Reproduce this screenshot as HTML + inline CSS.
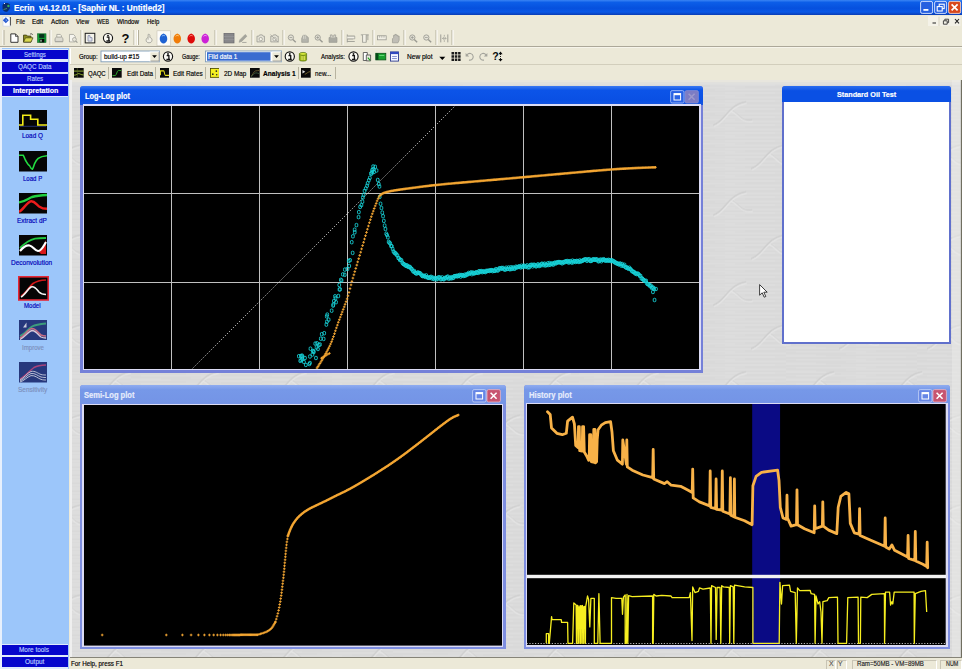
<!DOCTYPE html>
<html>
<head>
<meta charset="utf-8">
<title>Ecrin v4.12.01 - [Saphir NL : Untitled2]</title>
<style>
html,body{margin:0;padding:0;}
body{width:962px;height:669px;overflow:hidden;position:relative;background:#ece9d8;font-family:"Liberation Sans",sans-serif;font-size:9px;color:#000;}
div,span,svg{position:absolute;box-sizing:border-box;}
.t{white-space:nowrap;line-height:10px;height:10px;font-size:7.9px;transform-origin:0 50%;-webkit-text-stroke:0.18px currentColor;}
#titlebar{left:0;top:0;width:962px;height:15px;background:linear-gradient(#3a84f4 0%,#0c5ee8 16%,#0650de 55%,#0a58e6 80%,#0a3cb4 100%);}
#titletext{left:13.8px;top:1.6px;color:#fff;font-weight:bold;font-size:8.6px;line-height:12px;height:12px;}
#menubar{left:0;top:15px;width:962px;height:12px;background:#ece9d8;}
#tb1{left:0;top:27px;width:962px;height:21px;background:#ece9d8;}
#leftpanel{left:0;top:48px;width:69px;height:621px;background:#9cc6fa;}
.lbtn{left:2.2px;width:65.6px;height:9.8px;background:#0606cc;}
.lb{color:#b8ccff;}
.ll{color:#0000b8;font-size:7.9px;}
.lbl{width:69px;left:0;text-align:center;font-size:8.5px;line-height:10px;height:10px;color:#0000b0;white-space:nowrap;}
.ico{left:19px;width:28px;height:20.5px;background:#000;}
#tb2{left:70px;top:48px;width:892px;height:17px;background:#ece9d8;}
#tabs{left:70px;top:65px;width:892px;height:16px;background:#ece9d8;}
#mdi{left:70px;top:79.5px;width:892px;height:578px;background:#dbdbdb;overflow:hidden;}
#status{left:69px;top:657.5px;width:893px;height:11.5px;background:#ece9d8;}
.win{background:#7888e0;border-radius:3px 3px 0 0;}
.wt{left:0;top:0;height:18px;border-radius:3px 3px 0 0;}
.wtt{color:#fff;font-weight:bold;font-size:8.8px;}
.plot{display:block;}
.sep{width:1px;background:#b8b4a0;}
</style>
</head>
<body>

<!-- ===== Title bar ===== -->
<div id="titlebar">
    <svg style="left:0;top:0" width="14" height="15" viewBox="0 0 14 15"><path d="M2.5 5C4 2.5 8 2.5 9.8 4.5C10.6 6.5 9.5 10 7.5 11.5C5 12.5 2.5 11 2.5 8Z" fill="#0c2c6c"/><circle cx="8.4" cy="6" r="1.2" fill="#38b060"/><path d="M3.5 9.5L7 8.5" stroke="#4c8c5c" stroke-width="1"/><rect x="4" y="3" width="1" height="1" fill="#dfe8ff"/></svg>
  <svg style="left:918px;top:0" width="44" height="15" viewBox="918 0 44 15">
    <rect x="920.6" y="1.4" width="12" height="12" rx="1.6" fill="#2660e0" stroke="#dfe8ff" stroke-width="0.9"/><rect x="923.4" y="9" width="5" height="1.8" fill="#fff"/>
    <rect x="934.6" y="1.4" width="12" height="12" rx="1.6" fill="#2660e0" stroke="#dfe8ff" stroke-width="0.9"/><rect x="939.2" y="4.2" width="5" height="4.4" fill="none" stroke="#fff" stroke-width="1.1"/><rect x="937.2" y="6.6" width="5" height="4.4" fill="#2660e0" stroke="#fff" stroke-width="1.1"/>
    <rect x="948.6" y="1.4" width="12" height="12" rx="1.6" fill="#d8481c" stroke="#f4d4c8" stroke-width="0.9"/><path d="M951.6 4.4L957.6 10.4M957.6 4.4L951.6 10.4" stroke="#fff" stroke-width="1.7"/>
  </svg>
  <span id="titletext" class="t" style="transform:scaleX(0.953);">Ecrin&nbsp; v4.12.01 - [Saphir NL : Untitled2]</span>
</div>

<!-- ===== Menu bar ===== -->
<div id="menubar">
  <svg style="left:0;top:0" width="14" height="12" viewBox="0 15 14 12"><path d="M3 16.4H8.2L10.6 18.6V26.2H3Z" fill="#fdfdff" stroke="#c4cce0" stroke-width="0.6"/><path d="M5.8 17.2L8.8 20.2L5.8 23.2L2.8 20.2Z" fill="#2a5cd0"/><path d="M10.4 17V25.5" stroke="#333" stroke-width="0.9"/><path d="M5.8 19L7 20.2L5.8 21.4" fill="#9cc0ff"/></svg>
  <svg style="left:926px;top:0" width="36" height="12" viewBox="926 15 36 12"><rect x="928" y="16" width="10.5" height="10" fill="#f4f2e8"/><rect x="939.5" y="16" width="21" height="10" fill="#f2f0e6"/><path d="M932.5 23H936" stroke="#333" stroke-width="1.1"/><path d="M943.4 20.8H947.2V24.2H943.4Z" fill="none" stroke="#333" stroke-width="0.9"/><path d="M944.8 20.6V19.2H948.6V22.6H947.4" fill="none" stroke="#333" stroke-width="0.9"/><path d="M955 19L959 23.4M959 19L955 23.4" stroke="#222" stroke-width="1.1"/><path d="M939 17V26" stroke="#d4d0c0" stroke-width="0.7"/></svg>
  <span class="t" style="transform:scaleX(0.708);left:15.5px;top:1.7px;">File</span>
  <span class="t" style="transform:scaleX(0.808);left:32px;top:1.7px;">Edit</span>
  <span class="t" style="transform:scaleX(0.798);left:50.5px;top:1.7px;">Action</span>
  <span class="t" style="transform:scaleX(0.766);left:75.7px;top:1.7px;">View</span>
  <span class="t" style="transform:scaleX(0.667);left:96.7px;top:1.7px;">WEB</span>
  <span class="t" style="transform:scaleX(0.784);left:117px;top:1.7px;">Window</span>
  <span class="t" style="transform:scaleX(0.758);left:146.7px;top:1.7px;">Help</span>
</div>

<!-- ===== Toolbar 1 ===== -->
<div id="tb1">
<svg width="962" height="21" style="left:0;top:0" viewBox="0 0 962 21">
<path d="M3 3V18" stroke="#fff"/><path d="M4 3V18" stroke="#b4b09c"/>
<g transform="translate(14.3 11.1)"><path d="M-3.5 -4.2H1.2L3.7 -1.7V4.2H-3.5Z" fill="#fff" stroke="#222" stroke-width="0.9"/><path d="M1.2 -4.2V-1.7H3.7" fill="none" stroke="#222" stroke-width="0.7"/></g>
<g transform="translate(28 11.1)"><path d="M-4.5 4V-3H-1.5L-0.5 -2H3V4Z" fill="#8c8c20" stroke="#3c3c10" stroke-width="0.8"/><path d="M-4.5 4L-2.5 -0.3H5L3 4Z" fill="#d8d850" stroke="#3c3c10" stroke-width="0.7"/><path d="M2 -3.8C3 -4.8 4.3 -4.4 4.6 -3.2" stroke="#222" stroke-width="0.7" fill="none"/></g>
<g transform="translate(41.8 11.1)"><rect x="-4.2" y="-4.3" width="8.4" height="8.6" fill="#12a038" stroke="#0a6020" stroke-width="0.6"/><rect x="-2.6" y="-4" width="5.2" height="3.8" fill="#06301a"/><rect x="-2.2" y="0.8" width="4.8" height="3.5" fill="#050505"/><rect x="-1.4" y="1.6" width="1.2" height="2" fill="#bfe8c8"/></g>
<path d="M50 3V18" stroke="#b4b09c" stroke-width="1"/><path d="M51 3V18" stroke="#fff" stroke-width="1"/>
<g transform="translate(59 11.4) scale(0.88)"><path d="M-2.5 -1V-4.5H1.5L2.8 -3V-1" fill="#f4f2e8" stroke="#9a9a92" stroke-width="0.8"/><path d="M-4.5 3.5V0L-3 -1.5H3L4.5 0V3.5Z" fill="#dcdad0" stroke="#9a9a92" stroke-width="0.9"/><path d="M-4.5 3.8H4.5" stroke="#a8a8a0" stroke-width="1.2"/></g>
<g transform="translate(73 11.4) scale(0.88)"><path d="M-4 -4.5H0.5L2.5 -2.5V4H-4Z" fill="#f6f5ee" stroke="#9a9a92" stroke-width="0.8"/><circle cx="1.6" cy="1.2" r="2.2" fill="#e8e6da" stroke="#9a9a92" stroke-width="0.8"/><path d="M3.2 3L5 4.8" stroke="#9a9a92" stroke-width="1.3"/></g>
<path d="M81 3V18" stroke="#b4b09c" stroke-width="1"/><path d="M82 3V18" stroke="#fff" stroke-width="1"/>
<g transform="translate(90 11.1)"><rect x="-4.8" y="-4.8" width="9.6" height="9.6" fill="#f4f3ea" stroke="#1c1c1c" stroke-width="1"/><path d="M-2 -2.5H0V-0.5H2V3H-2Z" fill="#e0e4ee" stroke="#7880a0" stroke-width="0.7"/></g>
<g transform="translate(108 11.1)"><circle r="4.6" fill="#fbfaf4" stroke="#141414" stroke-width="1.15"/><path d="M-1.3 -0.9H0.9V2.7M-1.6 2.9H2" stroke="#141414" stroke-width="1.3" fill="none"/><circle cx="0" cy="-2.5" r="0.95" fill="#141414"/></g>
<text x="125.4" y="15.6" font-family="Liberation Sans" font-weight="bold" font-size="13" text-anchor="middle" fill="#0a0a0a">?</text>
<path d="M134 3V18" stroke="#b4b09c" stroke-width="1"/><path d="M135 3V18" stroke="#fff" stroke-width="1"/>
<path d="M137.5 3V18" stroke="#fff"/><path d="M138.5 3V18" stroke="#b4b09c"/>
<g transform="translate(149 11.4) scale(0.88)"><path d="M-1 -4.5C0.2 -5 1 -4.4 1 -3.3V-1C2.6 -0.8 3.6 0.4 3.4 2.2C3.2 4 2 5 0 5C-2 5 -3.3 3.8 -3.3 2C-3.3 0.4 -2.4 -0.6 -1 -1Z" fill="#f2f0e6" stroke="#9a9a92" stroke-width="0.9"/><path d="M-1 -1V1.5" stroke="#9a9a92" stroke-width="0.8"/></g>
<rect x="157" y="3.8" width="13.6" height="15" fill="#fdfcf8" stroke="#c8c4b4" stroke-width="0.6"/>
<g transform="translate(163.5 11.5)"><path d="M0 -5C2.6 -4.2 4.2 -1.5 3.6 1.6C3.1 4 1.6 5 0 5C-1.6 5 -3.1 4 -3.6 1.6C-4.2 -1.5 -2.6 -4.2 0 -5Z" fill="#1e62d2"/><path d="M-1.6 -2.2C-0.8 -3.2 0.6 -3.4 1.4 -2.6" stroke="#8fc0ff" stroke-width="1" fill="none"/></g>
<g transform="translate(177.3 11.5)"><path d="M0 -5C2.6 -4.2 4.2 -1.5 3.6 1.6C3.1 4 1.6 5 0 5C-1.6 5 -3.1 4 -3.6 1.6C-4.2 -1.5 -2.6 -4.2 0 -5Z" fill="#f07c08"/><path d="M-1.6 -2.2C-0.8 -3.2 0.6 -3.4 1.4 -2.6" stroke="#ffd080" stroke-width="1" fill="none"/></g>
<g transform="translate(191.2 11.5)"><path d="M0 -5C2.6 -4.2 4.2 -1.5 3.6 1.6C3.1 4 1.6 5 0 5C-1.6 5 -3.1 4 -3.6 1.6C-4.2 -1.5 -2.6 -4.2 0 -5Z" fill="#de0a0a"/><path d="M-1.6 -2.2C-0.8 -3.2 0.6 -3.4 1.4 -2.6" stroke="#ff8a7a" stroke-width="1" fill="none"/></g>
<g transform="translate(205.2 11.5)"><path d="M0 -5C2.6 -4.2 4.2 -1.5 3.6 1.6C3.1 4 1.6 5 0 5C-1.6 5 -3.1 4 -3.6 1.6C-4.2 -1.5 -2.6 -4.2 0 -5Z" fill="#cc22d6"/><path d="M-1.6 -2.2C-0.8 -3.2 0.6 -3.4 1.4 -2.6" stroke="#f8a0ff" stroke-width="1" fill="none"/></g>
<path d="M215 3V18" stroke="#b4b09c" stroke-width="1"/><path d="M216 3V18" stroke="#fff" stroke-width="1"/>
<g transform="translate(229 11.1)"><rect x="-5" y="-4.6" width="10" height="9.4" fill="#87878a" stroke="#6c6c70" stroke-width="0.8"/><path d="M-5 -1.5H5M-5 1.6H5" stroke="#9c9ca0" stroke-width="0.6"/></g>
<g transform="translate(243 11.4) scale(0.88)"><path d="M-4.5 4.5L-3.5 1.5L2.5 -4.5L4.5 -2.5L-1.5 3.5Z" fill="#a4a49c" stroke="#9a9a92" stroke-width="0.6"/><path d="M-1 4.6H4" stroke="#9a9a92" stroke-width="0.9"/></g>
<path d="M252 3V18" stroke="#b4b09c" stroke-width="1"/><path d="M253 3V18" stroke="#fff" stroke-width="1"/>
<g transform="translate(260.5 11.4) scale(0.88)"><path d="M-4 -2.5H-2L-1 -4H2L3 -2.5H4.5V4H-4Z" fill="#e4e2d6" stroke="#9a9a92" stroke-width="0.9"/><circle cx="0.3" cy="0.8" r="1.9" fill="#f6f4ea" stroke="#9a9a92" stroke-width="0.8"/></g>
<g transform="translate(274.3 11.4) scale(0.88)"><path d="M-4 -2.5H-2L-1 -4H2L3 -2.5H4.5V4H-4Z" fill="#e4e2d6" stroke="#9a9a92" stroke-width="0.9"/><circle cx="0.3" cy="0.8" r="1.9" fill="#f6f4ea" stroke="#9a9a92" stroke-width="0.8"/><path d="M-4.5 -4.5L4.5 4.5" stroke="#9a9a92" stroke-width="0.7"/></g>
<path d="M283 3V18" stroke="#b4b09c" stroke-width="1"/><path d="M284 3V18" stroke="#fff" stroke-width="1"/>
<g transform="translate(291.8 11.4) scale(0.88)"><circle cx="-1" cy="-1" r="3" fill="#e4e2d6" stroke="#9a9a92" stroke-width="1"/><path d="M1.2 1.2L4.5 4.5" stroke="#9a9a92" stroke-width="1.6"/><path d="M-2.6 -1H0.6" stroke="#9a9a92" stroke-width="0.9"/></g>
<g transform="translate(304.8 11.4) scale(0.88)"><path d="M-3.5 4.5V0L-2 -3.5H1L4 -1V4.5Z" fill="#b4b4ac" stroke="#9a9a92" stroke-width="0.8"/><path d="M-1.5 -3.5V0.5M0.5 -3.5V0.5" stroke="#e8e6dc" stroke-width="0.7"/></g>
<g transform="translate(318.6 11.4) scale(0.88)"><circle cx="-1" cy="-1" r="3" fill="#e4e2d6" stroke="#9a9a92" stroke-width="1"/><path d="M1.2 1.2L4.5 4.5" stroke="#9a9a92" stroke-width="1.6"/><path d="M-2.6 -1H0.6M-1 -2.6V0.6" stroke="#9a9a92" stroke-width="0.9"/></g>
<g transform="translate(333 11.4) scale(0.88)"><path d="M-4.5 4.5V-1H4.5V4.5Z" fill="#aaaaa2" stroke="#9a9a92" stroke-width="0.8"/><path d="M-3 -1V-4H-1V-2.5H1V-4H3V-1" fill="#d8d6cc" stroke="#9a9a92" stroke-width="0.8"/></g>
<path d="M342 3V18" stroke="#b4b09c" stroke-width="1"/><path d="M343 3V18" stroke="#fff" stroke-width="1"/>
<g transform="translate(350.8 11.4) scale(0.88)"><path d="M-4 -4.5V4.5M-4 -2.5H4.5M-4 0.5H2.5M-4 3.5H4.5" stroke="#9a9a92" stroke-width="1" fill="none"/><path d="M-4 -2.5H4.5V0.5H-4" fill="#f2f0e6" stroke="#9a9a92" stroke-width="0.8"/></g>
<g transform="translate(364.8 11.4) scale(0.88)"><path d="M-4.5 -4H4.5M-2.5 -4V4.5M1.5 -4V4.5M3.5 -4V2" stroke="#9a9a92" stroke-width="1" fill="none"/><path d="M-2.5 -4V4.5H1.5V-4" fill="#f2f0e6" stroke="#9a9a92" stroke-width="0.8"/></g>
<path d="M373 3V18" stroke="#b4b09c" stroke-width="1"/><path d="M374 3V18" stroke="#fff" stroke-width="1"/>
<g transform="translate(381.8 11.4) scale(0.88)"><rect x="-5" y="-3" width="10" height="4.6" fill="#f0eee4" stroke="#9a9a92" stroke-width="0.9"/><path d="M-2.5 -3V-0.8M0 -3V-0.8M2.5 -3V-0.8" stroke="#9a9a92" stroke-width="0.7"/></g>
<g transform="translate(395.8 11.4) scale(0.88)"><path d="M-3.8 5V0.5L-2.5 -1V-3.5H-1V-4.5H0.6V-3.5H2.2V-2.6H3.8V2L2.5 5Z" fill="#c0beb6" stroke="#9a9a92" stroke-width="0.8"/></g>
<path d="M404 3V18" stroke="#b4b09c" stroke-width="1"/><path d="M405 3V18" stroke="#fff" stroke-width="1"/>
<g transform="translate(413.2 11.4) scale(0.88)"><circle cx="-1" cy="-1" r="3" fill="#e4e2d6" stroke="#9a9a92" stroke-width="1"/><path d="M1.2 1.2L4.5 4.5" stroke="#9a9a92" stroke-width="1.6"/><path d="M-2.6 -1H0.6M-1 -2.6V0.6" stroke="#9a9a92" stroke-width="0.9"/></g>
<g transform="translate(427.2 11.4) scale(0.88)"><circle cx="-1" cy="-1" r="3" fill="#e4e2d6" stroke="#9a9a92" stroke-width="1"/><path d="M1.2 1.2L4.5 4.5" stroke="#9a9a92" stroke-width="1.6"/><path d="M-2.6 -1H0.6" stroke="#9a9a92" stroke-width="0.9"/></g>
<path d="M436 3V18" stroke="#b4b09c" stroke-width="1"/><path d="M437 3V18" stroke="#fff" stroke-width="1"/>
<g transform="translate(444.3 11.4) scale(0.88)"><path d="M-4 -4.5V4.5M4 -4.5V4.5" stroke="#9a9a92" stroke-width="1.1"/><path d="M-2 0H2M-2 0L-0.5 -1.5M-2 0L-0.5 1.5M2 0L0.5 -1.5M2 0L0.5 1.5M0 -4V-2M0 2V4" stroke="#9a9a92" stroke-width="0.8" fill="none"/></g>
<path d="M452 3V18" stroke="#b4b09c" stroke-width="1"/><path d="M453 3V18" stroke="#fff" stroke-width="1"/>
<path d="M0 19.5H962" stroke="#aca899" stroke-width="1"/><path d="M0 20.5H962" stroke="#f6f4ea" stroke-width="1"/>
</svg>
</div>

<!-- ===== Left panel ===== -->
<div id="leftpanel">
  <div style="left:0;top:0;width:2.2px;height:621px;background:#e8f0fc;"></div>
  <div style="left:2px;top:0.5px;width:66px;height:48.6px;background:#dfeafc;"></div>
  <div style="left:2px;top:596px;width:66px;height:25px;background:#dfeafc;"></div>
  <div class="lbtn" style="top:1.6px;"></div><span class="t lb" style="transform:scaleX(0.768);left:23.8px;top:1.5px;">Settings</span>
  <div class="lbtn" style="top:14px;"></div><span class="t lb" style="transform:scaleX(0.796);left:18px;top:13.9px;">QAQC Data</span>
  <div class="lbtn" style="top:26.1px;"></div><span class="t lb" style="transform:scaleX(0.785);left:26.9px;top:26px;">Rates</span>
  <div class="lbtn" style="top:38.3px;"></div><span class="t lb" style="transform:scaleX(0.893);left:12.5px;top:38.2px;color:#fff;font-weight:bold;">Interpretation</span>

  <svg style="left:19px;top:61.5px" width="28" height="20.5" viewBox="0 0 28 20.5"><rect width="28" height="20.5" fill="#050505"/><path d="M1 16.3H27" stroke="#2c3c8c" stroke-width="0.8"/><path d="M0 15H3.8V5.2H11.6V9.2H18.8V15H28" stroke="#f4ec18" stroke-width="1.6" fill="none"/></svg>
  <span class="t ll" style="transform:scaleX(0.811);left:21.5px;top:83px;">Load Q</span>
  <svg style="left:19px;top:103px" width="28" height="20.5" viewBox="0 0 28 20.5"><rect width="28" height="20.5" fill="#050505"/><path d="M0 4.2H4.2C5.2 5.5 5.6 7.6 6.4 9C7.6 11 8.6 13 9.6 14C10.4 14.6 10.8 14.8 11.2 15.8C11.8 17.2 12.6 18.4 13.4 18.2C14.4 17 14.8 14.6 15.6 12.6C16.6 10.4 17.6 8.8 19.2 7.4C21.4 5.8 24.4 5 28 4.7" stroke="#22dc40" stroke-width="1.6" fill="none"/></svg>
  <span class="t ll" style="transform:scaleX(0.768);left:22.7px;top:125.5px;">Load P</span>
  <svg style="left:19px;top:145px" width="28" height="20.5" viewBox="0 0 28 20.5"><rect width="28" height="20.5" fill="#050505"/><path d="M0 9.4C6 8.6 9 5.6 13 4C18 2.6 23 2.2 28 2" stroke="#20d040" stroke-width="2.4" fill="none"/><path d="M0 18.8C4 17 7 10.4 11.5 8.4C15 7.4 17 11 20 13.4C23 15.4 25.5 15.8 28 15.8" stroke="#ea1c1c" stroke-width="2.4" fill="none"/></svg>
  <span class="t ll" style="transform:scaleX(0.821);left:17.2px;top:168px;">Extract dP</span>
  <svg style="left:19px;top:187px" width="28" height="20.5" viewBox="0 0 28 20.5"><rect width="28" height="20.5" fill="#050505"/><path d="M1 13C5 9 10 5 16 3.6C20 3 24 3 27 3" stroke="#20c840" stroke-width="1.8" fill="none"/><path d="M20 17C23 15 25 10 27 5V19H22Z" fill="#d81818"/><path d="M1 16C4 12.5 7 10 10.5 10.5C14 11 15.5 15.5 19 16C22.5 16 24.5 11 27 7" stroke="#fff" stroke-width="2.2" fill="none"/></svg>
  <span class="t ll" style="transform:scaleX(0.824);left:11.4px;top:210px;">Deconvolution</span>
  <svg style="left:17.5px;top:227.8px" width="31" height="24.8" viewBox="0 0 31 24.8"><rect x="0.8" y="0.8" width="29.4" height="23.2" fill="#050505" stroke="#e42838" stroke-width="1.6"/><path d="M3 20C8 17.5 11 11 15 7.5C19 4.8 23 4.2 28 4" stroke="#d01818" stroke-width="1.7" fill="none"/><path d="M3 21C7 19 9.5 13 13 11C16.5 9.6 18.5 13 21 16C23 18 25.5 18.5 28 18.5" stroke="#f4f4f4" stroke-width="1.7" fill="none"/></svg>
  <span class="t ll" style="transform:scaleX(0.767);left:24.1px;top:252.5px;">Model</span>
  <svg style="left:19px;top:271.5px" width="28" height="20.5" viewBox="0 0 28 20.5"><rect width="28" height="20.5" fill="#26387c"/><path d="M1 16C6 14 9 9 13 6.5C17 4.5 22 4 27 3.5" stroke="#3c9c7c" stroke-width="1.8" fill="none"/><path d="M1 18C6 15.5 9 9 13 8.5C17 8.5 19 13 22 15C24 16 26 16 27 16" stroke="#c86c84" stroke-width="1.6" fill="none"/><path d="M1 19.5C6 17 9 11.5 13 10.5C17 10.5 19 15 22 17C24 18 26 18 27 18" stroke="#d8c8d8" stroke-width="1.3" fill="none"/><path d="M4 7.5L7.5 2.5V7.5Z" fill="#c8ccdc"/></svg>
  <span class="t ll" style="transform:scaleX(0.772);left:21.6px;top:294.7px;color:#7c90bc;">Improve</span>
  <svg style="left:19px;top:314px" width="28" height="20.5" viewBox="0 0 28 20.5"><rect width="28" height="20.5" fill="#26387c"/><path d="M1 17C6 15 10 9 15 5.5C19 3.5 23 3.2 27 3" stroke="#a8447c" stroke-width="1.5" fill="none"/><path d="M1 18C5 16 8 11 12 9.5C16 8.5 19 11.5 22 12.5C24 13 26 13 27 13M1 19C5 17.5 8 13 12 11.5C16 10.8 19 14 22 15C24 15.5 26 15.5 27 15.5M1 20C5 19 8 15 12 13.6C16 13 19 16.4 22 17.4C24 18 26 18 27 18" stroke="#c8ccdc" stroke-width="0.9" fill="none"/></svg>
  <span class="t ll" style="transform:scaleX(0.822);left:17.8px;top:336.6px;color:#7c90bc;">Sensitivity</span>

  <div class="lbtn" style="top:597px;"></div><span class="t lb" style="transform:scaleX(0.814);left:19.4px;top:597px;">More tools</span>
  <div class="lbtn" style="top:609.3px;"></div><span class="t lb" style="transform:scaleX(0.819);left:25px;top:609.2px;">Output</span>
</div>

<!-- ===== Toolbar 2 ===== -->
<div id="tb2">
<svg width="892" height="17" style="left:0;top:0" viewBox="0 0 892 17">
<path d="M0.5 17V0.5" stroke="#fff" fill="none"/><path d="M0 -0.5H892" stroke="#aca899"/>
<rect x="31" y="3" width="58.5" height="10.8" fill="#fff" stroke="#7f9db9" stroke-width="0.9"/><rect x="80.0" y="4" width="9" height="9" fill="#ece9d8" stroke="#fff" stroke-width="0.8"/><path d="M82.1 7.2H86.9L84.5 10Z" fill="#000"/><path d="M80.5 13H89.1V4" stroke="#8c887c" stroke-width="0.8" fill="none"/>
<g transform="translate(98 8.5)"><circle r="4.6" fill="#fbfaf4" stroke="#141414" stroke-width="1.15"/><path d="M-1.3 -0.9H0.9V2.7M-1.6 2.9H2" stroke="#141414" stroke-width="1.3" fill="none"/><circle cx="0" cy="-2.5" r="0.95" fill="#141414"/></g>
<rect x="135.5" y="3" width="76" height="10.8" fill="#fff" stroke="#7f9db9" stroke-width="0.9"/><rect x="137" y="4.2" width="63.5" height="8.5" fill="#3a6cd0"/><rect x="202.0" y="4" width="9" height="9" fill="#ece9d8" stroke="#fff" stroke-width="0.8"/><path d="M204.1 7.2H208.9L206.5 10Z" fill="#000"/><path d="M202.5 13H211.1V4" stroke="#8c887c" stroke-width="0.8" fill="none"/>
<g transform="translate(219.8 8.5)"><circle r="4.6" fill="#fbfaf4" stroke="#141414" stroke-width="1.15"/><path d="M-1.3 -0.9H0.9V2.7M-1.6 2.9H2" stroke="#141414" stroke-width="1.3" fill="none"/><circle cx="0" cy="-2.5" r="0.95" fill="#141414"/></g>
<g transform="translate(233 8.5)"><path d="M-3.6 -2.6V3.4C-3.6 5 3.6 5 3.6 3.4V-2.6Z" fill="#9cb418" stroke="#4c6c08" stroke-width="0.7"/><ellipse cx="0" cy="-2.6" rx="3.6" ry="1.5" fill="#d6e83c" stroke="#4c6c08" stroke-width="0.7"/><path d="M-1 -0.5V3.6M1.2 -0.5V3.6" stroke="#f0f480" stroke-width="0.9"/></g>
<g transform="translate(283.5 8.5)"><circle r="4.6" fill="#fbfaf4" stroke="#141414" stroke-width="1.15"/><path d="M-1.3 -0.9H0.9V2.7M-1.6 2.9H2" stroke="#141414" stroke-width="1.3" fill="none"/><circle cx="0" cy="-2.5" r="0.95" fill="#141414"/></g>
<g transform="translate(296.8 8.5)"><path d="M-3.5 -4H0.5V4H-3.5Z" fill="#fff" stroke="#444" stroke-width="0.8"/><path d="M-0.5 -1.5H3.8V4.4H-0.5Z" fill="#e8e8e0" stroke="#444" stroke-width="0.8"/><path d="M1 1.2L3.4 3.8" stroke="#18a018" stroke-width="1.2"/></g>
<g transform="translate(310.8 8.5)"><rect x="-5" y="-3.2" width="10" height="6.6" fill="#18a030" stroke="#0a5018" stroke-width="0.8"/><rect x="-5" y="-3.2" width="2.6" height="6.6" fill="#064818"/><path d="M-1.5 -1H3.5" stroke="#7be08c" stroke-width="0.8"/></g>
<g transform="translate(324.5 8.5)"><rect x="-4" y="-4.6" width="8" height="9.2" fill="#f4f6ff" stroke="#2a3a90" stroke-width="0.9"/><rect x="-4" y="-4.6" width="8" height="2.2" fill="#3048c0"/><path d="M-2.4 0H2.4M-2.4 2H2.4" stroke="#6a78c8" stroke-width="0.8"/></g>
<path d="M369.3 8.8H375.3L372.3 12Z" fill="#000"/>
<g transform="translate(386 8.5)"><path d="M-4.5 -4.5H-2V-2H-4.5ZM-1.2 -4.5H1.3V-2H-1.2ZM2.1 -4.5H4.6V-2H2.1ZM-4.5 -1.2H-2V1.3H-4.5ZM-1.2 -1.2H1.3V1.3H-1.2ZM2.1 -1.2H4.6V1.3H2.1ZM-4.5 2.1H-2V4.6H-4.5ZM-1.2 2.1H1.3V4.6H-1.2ZM2.1 2.1H4.6V4.6H2.1Z" fill="#1a1a1a"/></g>
<g transform="translate(399.8 8.5)"><path d="M-3 -1.5C-1 -4 3 -3.5 3.4 0C3.6 2.4 1.5 4 -0.8 3.6" stroke="#a4a49c" stroke-width="1.1" fill="none"/><path d="M-4.2 -3.6V0H-0.6Z" fill="#a4a49c"/></g>
<g transform="translate(413.2 8.5)"><path d="M3 -1.5C1 -4 -3 -3.5 -3.4 0C-3.6 2.4 -1.5 4 0.8 3.6" stroke="#a4a49c" stroke-width="1.1" fill="none"/><path d="M4.2 -3.6V0H0.6Z" fill="#a4a49c"/></g>
<text x="425.5" y="12.2" font-family="Liberation Sans" font-weight="bold" font-size="10.5" text-anchor="middle" fill="#0a0a0a">?</text><path d="M430.5 3.6L432.6 6.2H428.4ZM430.5 13.6L432.6 11H428.4Z" fill="#0a0a0a"/><path d="M430.5 6V11" stroke="#0a0a0a" stroke-width="0.9" stroke-dasharray="1 1"/>
</svg>
<span class="t" style="transform:scaleX(0.775);left:8.7px;top:3.5px;">Group:</span>
<span class="t" style="transform:scaleX(0.813);left:33.7px;top:3.5px;">build-up #15</span>
<span class="t" style="transform:scaleX(0.691);left:112px;top:3.5px;">Gauge:</span>
<span class="t" style="transform:scaleX(0.795);left:137.7px;top:3.5px;color:#fff;">Fild data 1</span>
<span class="t" style="transform:scaleX(0.760);left:251px;top:3.5px;">Analysis:</span>
<span class="t" style="transform:scaleX(0.831);left:336.5px;top:3.5px;">New plot</span>
</div>

<!-- ===== Tabs ===== -->
<div id="tabs">
<div style="left:0;top:-1.1px;width:892px;height:1px;background:#d2cebc;"></div>
<svg style="left:4.3px;top:3.4px" width="9.7" height="9.7" preserveAspectRatio="none" viewBox="0 0 10.5 10"><rect width="10.5" height="10" fill="#0a0a0a"/><path d="M0 3.2H10.5M0 7.4C3 7.4 3.6 5.8 5 5.8C6.6 5.8 7.4 7.2 10.5 7.2" stroke="#a8c838" stroke-width="0.9" fill="none"/><path d="M3.6 0V10" stroke="#5c6c20" stroke-width="0.6"/></svg>
<span class="t" style="transform:scaleX(0.757);left:18px;top:3.9px;">QAQC</span>
<div class="sep" style="left:37.8px;top:2px;height:12px;"></div>
<svg style="left:42.3px;top:3.4px" width="9.7" height="9.7" preserveAspectRatio="none" viewBox="0 0 10.5 10"><rect width="10.5" height="10" fill="#0a0a0a"/><path d="M0.5 7.8H3.5C5 7.8 5.4 2.6 6.8 2.6H10" stroke="#30b030" stroke-width="1" fill="none"/></svg>
<span class="t" style="transform:scaleX(0.804);left:56.9px;top:3.9px;">Edit Data</span>
<div class="sep" style="left:85.3px;top:2px;height:12px;"></div>
<svg style="left:89.5px;top:3.4px" width="9.7" height="9.7" preserveAspectRatio="none" viewBox="0 0 10.5 10"><rect width="10.5" height="10" fill="#0a0a0a"/><path d="M0.5 7.6V3H4C4.8 3 4.8 7.6 5.8 7.6H10.5" stroke="#e8e020" stroke-width="1.1" fill="none"/></svg>
<span class="t" style="transform:scaleX(0.816);left:103px;top:3.9px;">Edit Rates</span>
<div class="sep" style="left:134.6px;top:2px;height:12px;"></div>
<svg style="left:139.7px;top:3.4px" width="9.7" height="9.7" preserveAspectRatio="none" viewBox="0 0 10.4 10"><rect width="10.4" height="10" fill="#f4f020"/><rect x="0.4" y="0.4" width="9.6" height="9.2" fill="#f4f020" stroke="#3c3c08" stroke-width="0.8"/><circle cx="3" cy="6.4" r="0.9" fill="#222"/><circle cx="6.8" cy="3.2" r="0.9" fill="#222"/><circle cx="7.2" cy="7" r="0.8" fill="#222"/></svg>
<span class="t" style="transform:scaleX(0.810);left:153.6px;top:3.9px;">2D Map</span>
<svg style="left:179.9px;top:3.4px" width="9.7" height="9.7" preserveAspectRatio="none" viewBox="0 0 10.6 10"><rect width="10.6" height="10" fill="#0a0a0a"/><path d="M1 8.5C3 7.5 4 3.4 6 3C8 2.8 9 2.6 10.6 2.4" stroke="#6c5c30" stroke-width="0.9" fill="none"/><path d="M1 9C3.5 8 4 5 6.4 5C8 5 9 5.6 10.6 6" stroke="#3c5c3c" stroke-width="0.9" fill="none"/></svg>
<span class="t" style="transform:scaleX(0.837);left:193px;top:3.6px;font-weight:bold;">Analysis 1</span>
<div class="sep" style="left:227.8px;top:2px;height:12px;"></div>
<svg style="left:231.3px;top:3.4px" width="9.7" height="9.7" preserveAspectRatio="none" viewBox="0 0 10.2 10"><rect width="10.2" height="10" fill="#0a0a0a"/><path d="M1.5 2L4.5 3.8L1.5 5.6Z" fill="#ddd"/><path d="M4 6.5C6 6 7 4 10 3.6" stroke="#80682c" stroke-width="0.9" fill="none"/></svg>
<span class="t" style="transform:scaleX(0.785);left:245px;top:3.9px;">new...</span>
<div class="sep" style="left:264.8px;top:2px;height:12px;"></div>
</div>

<!-- ===== MDI client area ===== -->
<div id="mdi">
<svg style="left:0;top:0" width="892" height="578" viewBox="70 79.5 892 578">
<defs>
<pattern id="brush" width="131" height="8" patternUnits="userSpaceOnUse"><rect width="131" height="8" fill="#dbdbdb"/><path d="M0 0.5H70M30 2.5H131M0 5.5H55M90 6.5H131" stroke="#d7d7d7" stroke-width="1"/><path d="M60 1.5H131M0 3.5H40M70 4.5H120M10 7.5H80" stroke="#dfdfdf" stroke-width="1"/></pattern>
<pattern id="logos" width="88" height="90" patternUnits="userSpaceOnUse"><g transform="translate(29.6 23.6)"><g fill="none" stroke-linecap="round"><path d="M-20 11C-8 7 -6 -9 12 -12M-3 -4C4 -2 6 8 18 6" stroke="#cdcdcd" stroke-width="1.5"/><path d="M-19.3 12.2C-7.3 8.2 -5.3 -7.8 12.7 -10.8M-2.3 -2.8C4.7 -0.8 6.7 9.2 18.7 7.2" stroke="#e6e6e6" stroke-width="1.2"/></g></g><g transform="translate(-20.3 67.0)"><g fill="none" stroke-linecap="round"><path d="M-20 11C-8 7 -6 -9 12 -12M-3 -4C4 -2 6 8 18 6" stroke="#cdcdcd" stroke-width="1.5"/><path d="M-19.3 12.2C-7.3 8.2 -5.3 -7.8 12.7 -10.8M-2.3 -2.8C4.7 -0.8 6.7 9.2 18.7 7.2" stroke="#e6e6e6" stroke-width="1.2"/></g></g><g transform="translate(67.7 67.0)"><g fill="none" stroke-linecap="round"><path d="M-20 11C-8 7 -6 -9 12 -12M-3 -4C4 -2 6 8 18 6" stroke="#cdcdcd" stroke-width="1.5"/><path d="M-19.3 12.2C-7.3 8.2 -5.3 -7.8 12.7 -10.8M-2.3 -2.8C4.7 -0.8 6.7 9.2 18.7 7.2" stroke="#e6e6e6" stroke-width="1.2"/></g></g></pattern>
</defs>
<rect x="70" y="79" width="892" height="579" fill="url(#brush)"/>
<rect x="70" y="79" width="892" height="579" fill="url(#logos)"/>
<rect x="70" y="79.5" width="892" height="2.5" fill="#e8e6de"/><rect x="70" y="82" width="892" height="2" fill="#e2e2e0" opacity="0.7"/>
<rect x="70" y="79.5" width="2" height="578" fill="#efefef"/>
<rect x="960.8" y="79.5" width="1.2" height="578" fill="#706e60"/><rect x="952" y="79.5" width="8.8" height="578" fill="#f0f0ee" opacity="0.4"/>
<rect x="70" y="656.6" width="892" height="0.9" fill="#7c7a6c"/>
</svg>
</div>

<!-- Log-Log window -->
<div class="win" style="left:80.2px;top:86.3px;width:623px;height:286.7px;background:#7480d8;">
  <div class="wt" style="width:622.8px;height:18.5px;background:linear-gradient(#3a78f2 0%,#0c54e8 22%,#0a50e4 75%,#1656e0 100%);"></div>
  <div style="left:2.4px;top:18px;width:618.2px;height:266.1px;background:#dcdcf4;"></div>
  <span class="t wtt" style="transform:scaleX(0.835);left:4.6px;top:5px;">Log-Log plot</span>
</div>
<svg style="left:669.5px;top:89.5px" width="30" height="14" viewBox="0 0 30 14"><rect x="0.6" y="0.6" width="13.4" height="12.4" rx="1.5" fill="#2a62e4" stroke="#9cb8f8" stroke-width="0.9"/><rect x="4" y="3.6" width="6.6" height="6.4" fill="none" stroke="#fff" stroke-width="1"/><path d="M4 4.4H10.6" stroke="#fff" stroke-width="1.6"/><rect x="15" y="0.6" width="13.4" height="12.4" rx="1.5" fill="#7c7cc4" stroke="#8890d4" stroke-width="0.7"/><path d="M18.6 3.8L24.6 9.8M24.6 3.8L18.6 9.8" stroke="#9c98cc" stroke-width="1.6"/></svg>
<svg class="plot" style="left:84px;top:106px" width="615" height="263" viewBox="84 106 615 263">
<rect x="84" y="106" width="615" height="263" fill="#000"/>
<path d="M171.5 106V370M259.5 106V370M347.5 106V370M435.5 106V370M523.5 106V370M611.5 106V370M84 193.5H699M84 282.5H699" stroke="#c0c0c0" stroke-width="1" fill="none"/>
<path d="M191.5 369.5L455 106" stroke="#d8d8d8" stroke-width="0.9" stroke-dasharray="1.2 1.6" fill="none"/>
<path d="M297.5 356.2a1.4 1.4 0 1 0 2.7 0a1.4 1.4 0 1 0 -2.7 0M300.7 355.6a1.4 1.4 0 1 0 2.7 0a1.4 1.4 0 1 0 -2.7 0M301.0 359.0a1.4 1.4 0 1 0 2.7 0a1.4 1.4 0 1 0 -2.7 0M298.9 360.8a1.4 1.4 0 1 0 2.7 0a1.4 1.4 0 1 0 -2.7 0M299.9 360.2a1.4 1.4 0 1 0 2.7 0a1.4 1.4 0 1 0 -2.7 0M301.1 356.7a1.4 1.4 0 1 0 2.7 0a1.4 1.4 0 1 0 -2.7 0M304.5 364.9a1.4 1.4 0 1 0 2.7 0a1.4 1.4 0 1 0 -2.7 0M303.6 358.0a1.4 1.4 0 1 0 2.7 0a1.4 1.4 0 1 0 -2.7 0M307.9 364.1a1.4 1.4 0 1 0 2.7 0a1.4 1.4 0 1 0 -2.7 0M308.6 356.5a1.4 1.4 0 1 0 2.7 0a1.4 1.4 0 1 0 -2.7 0M312.2 351.2a1.4 1.4 0 1 0 2.7 0a1.4 1.4 0 1 0 -2.7 0M312.4 352.1a1.4 1.4 0 1 0 2.7 0a1.4 1.4 0 1 0 -2.7 0M309.1 348.7a1.4 1.4 0 1 0 2.7 0a1.4 1.4 0 1 0 -2.7 0M311.1 354.5a1.4 1.4 0 1 0 2.7 0a1.4 1.4 0 1 0 -2.7 0M311.4 350.9a1.4 1.4 0 1 0 2.7 0a1.4 1.4 0 1 0 -2.7 0M315.2 347.6a1.4 1.4 0 1 0 2.7 0a1.4 1.4 0 1 0 -2.7 0M315.7 343.3a1.4 1.4 0 1 0 2.7 0a1.4 1.4 0 1 0 -2.7 0M313.9 343.6a1.4 1.4 0 1 0 2.7 0a1.4 1.4 0 1 0 -2.7 0M318.6 344.5a1.4 1.4 0 1 0 2.7 0a1.4 1.4 0 1 0 -2.7 0M317.5 344.9a1.4 1.4 0 1 0 2.7 0a1.4 1.4 0 1 0 -2.7 0M319.4 338.7a1.4 1.4 0 1 0 2.7 0a1.4 1.4 0 1 0 -2.7 0M322.3 338.9a1.4 1.4 0 1 0 2.7 0a1.4 1.4 0 1 0 -2.7 0M320.4 334.2a1.4 1.4 0 1 0 2.7 0a1.4 1.4 0 1 0 -2.7 0M322.9 333.2a1.4 1.4 0 1 0 2.7 0a1.4 1.4 0 1 0 -2.7 0M325.0 324.6a1.4 1.4 0 1 0 2.7 0a1.4 1.4 0 1 0 -2.7 0M327.3 319.7a1.4 1.4 0 1 0 2.7 0a1.4 1.4 0 1 0 -2.7 0M325.6 321.7a1.4 1.4 0 1 0 2.7 0a1.4 1.4 0 1 0 -2.7 0M325.4 316.4a1.4 1.4 0 1 0 2.7 0a1.4 1.4 0 1 0 -2.7 0M325.9 314.6a1.4 1.4 0 1 0 2.7 0a1.4 1.4 0 1 0 -2.7 0M330.3 310.7a1.4 1.4 0 1 0 2.7 0a1.4 1.4 0 1 0 -2.7 0M331.8 305.6a1.4 1.4 0 1 0 2.7 0a1.4 1.4 0 1 0 -2.7 0M332.0 304.5a1.4 1.4 0 1 0 2.7 0a1.4 1.4 0 1 0 -2.7 0M332.6 301.0a1.4 1.4 0 1 0 2.7 0a1.4 1.4 0 1 0 -2.7 0M334.7 302.2a1.4 1.4 0 1 0 2.7 0a1.4 1.4 0 1 0 -2.7 0M334.2 298.2a1.4 1.4 0 1 0 2.7 0a1.4 1.4 0 1 0 -2.7 0M333.7 296.3a1.4 1.4 0 1 0 2.7 0a1.4 1.4 0 1 0 -2.7 0M337.0 296.0a1.4 1.4 0 1 0 2.7 0a1.4 1.4 0 1 0 -2.7 0M338.7 289.3a1.4 1.4 0 1 0 2.7 0a1.4 1.4 0 1 0 -2.7 0M338.1 289.5a1.4 1.4 0 1 0 2.7 0a1.4 1.4 0 1 0 -2.7 0M337.9 285.0a1.4 1.4 0 1 0 2.7 0a1.4 1.4 0 1 0 -2.7 0M339.5 279.8a1.4 1.4 0 1 0 2.7 0a1.4 1.4 0 1 0 -2.7 0M340.2 280.5a1.4 1.4 0 1 0 2.7 0a1.4 1.4 0 1 0 -2.7 0M341.5 274.4a1.4 1.4 0 1 0 2.7 0a1.4 1.4 0 1 0 -2.7 0M343.4 274.8a1.4 1.4 0 1 0 2.7 0a1.4 1.4 0 1 0 -2.7 0M343.5 269.6a1.4 1.4 0 1 0 2.7 0a1.4 1.4 0 1 0 -2.7 0M346.1 269.0a1.4 1.4 0 1 0 2.7 0a1.4 1.4 0 1 0 -2.7 0M347.9 266.0a1.4 1.4 0 1 0 2.7 0a1.4 1.4 0 1 0 -2.7 0M347.4 260.9a1.4 1.4 0 1 0 2.7 0a1.4 1.4 0 1 0 -2.7 0M348.7 260.2a1.4 1.4 0 1 0 2.7 0a1.4 1.4 0 1 0 -2.7 0M351.3 252.9a1.4 1.4 0 1 0 2.7 0a1.4 1.4 0 1 0 -2.7 0M350.4 242.2a1.4 1.4 0 1 0 2.7 0a1.4 1.4 0 1 0 -2.7 0M351.6 236.3a1.4 1.4 0 1 0 2.7 0a1.4 1.4 0 1 0 -2.7 0M353.4 232.3a1.4 1.4 0 1 0 2.7 0a1.4 1.4 0 1 0 -2.7 0M353.3 229.7a1.4 1.4 0 1 0 2.7 0a1.4 1.4 0 1 0 -2.7 0M355.1 225.1a1.4 1.4 0 1 0 2.7 0a1.4 1.4 0 1 0 -2.7 0M357.2 217.1a1.4 1.4 0 1 0 2.7 0a1.4 1.4 0 1 0 -2.7 0M357.5 212.1a1.4 1.4 0 1 0 2.7 0a1.4 1.4 0 1 0 -2.7 0M358.8 206.9a1.4 1.4 0 1 0 2.7 0a1.4 1.4 0 1 0 -2.7 0M360.1 205.1a1.4 1.4 0 1 0 2.7 0a1.4 1.4 0 1 0 -2.7 0M361.1 201.7a1.4 1.4 0 1 0 2.7 0a1.4 1.4 0 1 0 -2.7 0M361.5 197.6a1.4 1.4 0 1 0 2.7 0a1.4 1.4 0 1 0 -2.7 0M362.2 195.0a1.4 1.4 0 1 0 2.7 0a1.4 1.4 0 1 0 -2.7 0M363.2 190.9a1.4 1.4 0 1 0 2.7 0a1.4 1.4 0 1 0 -2.7 0M364.4 188.5a1.4 1.4 0 1 0 2.7 0a1.4 1.4 0 1 0 -2.7 0M365.7 185.8a1.4 1.4 0 1 0 2.7 0a1.4 1.4 0 1 0 -2.7 0M366.3 183.2a1.4 1.4 0 1 0 2.7 0a1.4 1.4 0 1 0 -2.7 0M367.5 180.2a1.4 1.4 0 1 0 2.7 0a1.4 1.4 0 1 0 -2.7 0M368.5 177.8a1.4 1.4 0 1 0 2.7 0a1.4 1.4 0 1 0 -2.7 0M370.2 173.6a1.4 1.4 0 1 0 2.7 0a1.4 1.4 0 1 0 -2.7 0M370.8 171.8a1.4 1.4 0 1 0 2.7 0a1.4 1.4 0 1 0 -2.7 0M372.0 169.3a1.4 1.4 0 1 0 2.7 0a1.4 1.4 0 1 0 -2.7 0M370.8 170.0a1.4 1.4 0 1 0 2.7 0a1.4 1.4 0 1 0 -2.7 0M371.8 166.5a1.4 1.4 0 1 0 2.7 0a1.4 1.4 0 1 0 -2.7 0M373.8 166.8a1.4 1.4 0 1 0 2.7 0a1.4 1.4 0 1 0 -2.7 0M375.2 170.5a1.4 1.4 0 1 0 2.7 0a1.4 1.4 0 1 0 -2.7 0M376.4 180.0a1.4 1.4 0 1 0 2.7 0a1.4 1.4 0 1 0 -2.7 0M377.4 184.0a1.4 1.4 0 1 0 2.7 0a1.4 1.4 0 1 0 -2.7 0M378.1 186.5a1.4 1.4 0 1 0 2.7 0a1.4 1.4 0 1 0 -2.7 0M372.6 172.0a1.4 1.4 0 1 0 2.7 0a1.4 1.4 0 1 0 -2.7 0M369.6 173.5a1.4 1.4 0 1 0 2.7 0a1.4 1.4 0 1 0 -2.7 0M299.6 356.0a1.4 1.4 0 1 0 2.7 0a1.4 1.4 0 1 0 -2.7 0M302.6 362.0a1.4 1.4 0 1 0 2.7 0a1.4 1.4 0 1 0 -2.7 0M308.6 363.0a1.4 1.4 0 1 0 2.7 0a1.4 1.4 0 1 0 -2.7 0M314.6 358.0a1.4 1.4 0 1 0 2.7 0a1.4 1.4 0 1 0 -2.7 0M316.6 349.0a1.4 1.4 0 1 0 2.7 0a1.4 1.4 0 1 0 -2.7 0M378.4 196.8a1.4 1.4 0 1 0 2.7 0a1.4 1.4 0 1 0 -2.7 0M379.2 203.8a1.4 1.4 0 1 0 2.7 0a1.4 1.4 0 1 0 -2.7 0M380.1 208.0a1.4 1.4 0 1 0 2.7 0a1.4 1.4 0 1 0 -2.7 0M380.9 212.6a1.4 1.4 0 1 0 2.7 0a1.4 1.4 0 1 0 -2.7 0M381.7 216.2a1.4 1.4 0 1 0 2.7 0a1.4 1.4 0 1 0 -2.7 0M382.5 220.9a1.4 1.4 0 1 0 2.7 0a1.4 1.4 0 1 0 -2.7 0M383.3 225.6a1.4 1.4 0 1 0 2.7 0a1.4 1.4 0 1 0 -2.7 0M384.1 229.0a1.4 1.4 0 1 0 2.7 0a1.4 1.4 0 1 0 -2.7 0M384.9 233.7a1.4 1.4 0 1 0 2.7 0a1.4 1.4 0 1 0 -2.7 0M385.7 235.1a1.4 1.4 0 1 0 2.7 0a1.4 1.4 0 1 0 -2.7 0M386.5 237.3a1.4 1.4 0 1 0 2.7 0a1.4 1.4 0 1 0 -2.7 0M387.3 241.8a1.4 1.4 0 1 0 2.7 0a1.4 1.4 0 1 0 -2.7 0M388.1 242.7a1.4 1.4 0 1 0 2.7 0a1.4 1.4 0 1 0 -2.7 0M388.9 243.5a1.4 1.4 0 1 0 2.7 0a1.4 1.4 0 1 0 -2.7 0M389.7 246.0a1.4 1.4 0 1 0 2.7 0a1.4 1.4 0 1 0 -2.7 0M390.5 246.3a1.4 1.4 0 1 0 2.7 0a1.4 1.4 0 1 0 -2.7 0M391.3 248.9a1.4 1.4 0 1 0 2.7 0a1.4 1.4 0 1 0 -2.7 0M392.1 251.4a1.4 1.4 0 1 0 2.7 0a1.4 1.4 0 1 0 -2.7 0M392.9 252.4a1.4 1.4 0 1 0 2.7 0a1.4 1.4 0 1 0 -2.7 0M393.7 253.3a1.4 1.4 0 1 0 2.7 0a1.4 1.4 0 1 0 -2.7 0M394.5 253.5a1.4 1.4 0 1 0 2.7 0a1.4 1.4 0 1 0 -2.7 0M395.3 254.9a1.4 1.4 0 1 0 2.7 0a1.4 1.4 0 1 0 -2.7 0M396.1 255.5a1.4 1.4 0 1 0 2.7 0a1.4 1.4 0 1 0 -2.7 0M396.9 258.0a1.4 1.4 0 1 0 2.7 0a1.4 1.4 0 1 0 -2.7 0M397.7 258.4a1.4 1.4 0 1 0 2.7 0a1.4 1.4 0 1 0 -2.7 0M398.5 260.0a1.4 1.4 0 1 0 2.7 0a1.4 1.4 0 1 0 -2.7 0M399.3 259.8a1.4 1.4 0 1 0 2.7 0a1.4 1.4 0 1 0 -2.7 0M400.1 260.3a1.4 1.4 0 1 0 2.7 0a1.4 1.4 0 1 0 -2.7 0M400.9 262.6a1.4 1.4 0 1 0 2.7 0a1.4 1.4 0 1 0 -2.7 0M401.7 263.7a1.4 1.4 0 1 0 2.7 0a1.4 1.4 0 1 0 -2.7 0M402.5 264.1a1.4 1.4 0 1 0 2.7 0a1.4 1.4 0 1 0 -2.7 0M403.3 264.7a1.4 1.4 0 1 0 2.7 0a1.4 1.4 0 1 0 -2.7 0M404.1 265.4a1.4 1.4 0 1 0 2.7 0a1.4 1.4 0 1 0 -2.7 0M404.9 265.9a1.4 1.4 0 1 0 2.7 0a1.4 1.4 0 1 0 -2.7 0M405.7 265.3a1.4 1.4 0 1 0 2.7 0a1.4 1.4 0 1 0 -2.7 0M406.5 266.6a1.4 1.4 0 1 0 2.7 0a1.4 1.4 0 1 0 -2.7 0M407.3 266.9a1.4 1.4 0 1 0 2.7 0a1.4 1.4 0 1 0 -2.7 0M408.1 266.7a1.4 1.4 0 1 0 2.7 0a1.4 1.4 0 1 0 -2.7 0M408.9 267.3a1.4 1.4 0 1 0 2.7 0a1.4 1.4 0 1 0 -2.7 0M409.7 268.5a1.4 1.4 0 1 0 2.7 0a1.4 1.4 0 1 0 -2.7 0M410.5 269.0a1.4 1.4 0 1 0 2.7 0a1.4 1.4 0 1 0 -2.7 0M411.3 270.6a1.4 1.4 0 1 0 2.7 0a1.4 1.4 0 1 0 -2.7 0M412.1 271.7a1.4 1.4 0 1 0 2.7 0a1.4 1.4 0 1 0 -2.7 0M412.9 271.0a1.4 1.4 0 1 0 2.7 0a1.4 1.4 0 1 0 -2.7 0M413.7 272.7a1.4 1.4 0 1 0 2.7 0a1.4 1.4 0 1 0 -2.7 0M414.5 273.2a1.4 1.4 0 1 0 2.7 0a1.4 1.4 0 1 0 -2.7 0M415.3 273.6a1.4 1.4 0 1 0 2.7 0a1.4 1.4 0 1 0 -2.7 0M416.1 272.6a1.4 1.4 0 1 0 2.7 0a1.4 1.4 0 1 0 -2.7 0M416.9 272.6a1.4 1.4 0 1 0 2.7 0a1.4 1.4 0 1 0 -2.7 0M417.7 273.0a1.4 1.4 0 1 0 2.7 0a1.4 1.4 0 1 0 -2.7 0M418.5 273.3a1.4 1.4 0 1 0 2.7 0a1.4 1.4 0 1 0 -2.7 0M419.3 273.7a1.4 1.4 0 1 0 2.7 0a1.4 1.4 0 1 0 -2.7 0M420.1 275.0a1.4 1.4 0 1 0 2.7 0a1.4 1.4 0 1 0 -2.7 0M420.9 276.0a1.4 1.4 0 1 0 2.7 0a1.4 1.4 0 1 0 -2.7 0M421.7 276.1a1.4 1.4 0 1 0 2.7 0a1.4 1.4 0 1 0 -2.7 0M422.5 275.6a1.4 1.4 0 1 0 2.7 0a1.4 1.4 0 1 0 -2.7 0M423.3 276.3a1.4 1.4 0 1 0 2.7 0a1.4 1.4 0 1 0 -2.7 0M424.1 276.9a1.4 1.4 0 1 0 2.7 0a1.4 1.4 0 1 0 -2.7 0M424.9 275.4a1.4 1.4 0 1 0 2.7 0a1.4 1.4 0 1 0 -2.7 0M425.7 277.0a1.4 1.4 0 1 0 2.7 0a1.4 1.4 0 1 0 -2.7 0M426.5 277.8a1.4 1.4 0 1 0 2.7 0a1.4 1.4 0 1 0 -2.7 0M427.3 277.7a1.4 1.4 0 1 0 2.7 0a1.4 1.4 0 1 0 -2.7 0M428.1 277.8a1.4 1.4 0 1 0 2.7 0a1.4 1.4 0 1 0 -2.7 0M428.9 277.3a1.4 1.4 0 1 0 2.7 0a1.4 1.4 0 1 0 -2.7 0M429.7 276.8a1.4 1.4 0 1 0 2.7 0a1.4 1.4 0 1 0 -2.7 0M430.5 278.4a1.4 1.4 0 1 0 2.7 0a1.4 1.4 0 1 0 -2.7 0M431.3 277.5a1.4 1.4 0 1 0 2.7 0a1.4 1.4 0 1 0 -2.7 0M432.1 278.7a1.4 1.4 0 1 0 2.7 0a1.4 1.4 0 1 0 -2.7 0M432.9 279.2a1.4 1.4 0 1 0 2.7 0a1.4 1.4 0 1 0 -2.7 0M433.7 277.9a1.4 1.4 0 1 0 2.7 0a1.4 1.4 0 1 0 -2.7 0M434.5 278.0a1.4 1.4 0 1 0 2.7 0a1.4 1.4 0 1 0 -2.7 0M435.3 279.3a1.4 1.4 0 1 0 2.7 0a1.4 1.4 0 1 0 -2.7 0M436.1 278.8a1.4 1.4 0 1 0 2.7 0a1.4 1.4 0 1 0 -2.7 0M436.9 277.5a1.4 1.4 0 1 0 2.7 0a1.4 1.4 0 1 0 -2.7 0M437.7 277.4a1.4 1.4 0 1 0 2.7 0a1.4 1.4 0 1 0 -2.7 0M438.5 277.5a1.4 1.4 0 1 0 2.7 0a1.4 1.4 0 1 0 -2.7 0M439.3 279.3a1.4 1.4 0 1 0 2.7 0a1.4 1.4 0 1 0 -2.7 0M440.1 279.0a1.4 1.4 0 1 0 2.7 0a1.4 1.4 0 1 0 -2.7 0M440.9 277.4a1.4 1.4 0 1 0 2.7 0a1.4 1.4 0 1 0 -2.7 0M441.7 279.0a1.4 1.4 0 1 0 2.7 0a1.4 1.4 0 1 0 -2.7 0M442.5 279.3a1.4 1.4 0 1 0 2.7 0a1.4 1.4 0 1 0 -2.7 0M443.3 278.5a1.4 1.4 0 1 0 2.7 0a1.4 1.4 0 1 0 -2.7 0M444.1 277.7a1.4 1.4 0 1 0 2.7 0a1.4 1.4 0 1 0 -2.7 0M444.9 278.1a1.4 1.4 0 1 0 2.7 0a1.4 1.4 0 1 0 -2.7 0M445.7 277.0a1.4 1.4 0 1 0 2.7 0a1.4 1.4 0 1 0 -2.7 0M446.5 276.6a1.4 1.4 0 1 0 2.7 0a1.4 1.4 0 1 0 -2.7 0M447.3 278.8a1.4 1.4 0 1 0 2.7 0a1.4 1.4 0 1 0 -2.7 0M448.1 278.0a1.4 1.4 0 1 0 2.7 0a1.4 1.4 0 1 0 -2.7 0M448.9 277.6a1.4 1.4 0 1 0 2.7 0a1.4 1.4 0 1 0 -2.7 0M449.7 278.4a1.4 1.4 0 1 0 2.7 0a1.4 1.4 0 1 0 -2.7 0M450.5 277.1a1.4 1.4 0 1 0 2.7 0a1.4 1.4 0 1 0 -2.7 0M451.3 278.0a1.4 1.4 0 1 0 2.7 0a1.4 1.4 0 1 0 -2.7 0M452.1 277.8a1.4 1.4 0 1 0 2.7 0a1.4 1.4 0 1 0 -2.7 0M452.9 276.2a1.4 1.4 0 1 0 2.7 0a1.4 1.4 0 1 0 -2.7 0M453.7 276.1a1.4 1.4 0 1 0 2.7 0a1.4 1.4 0 1 0 -2.7 0M454.5 276.1a1.4 1.4 0 1 0 2.7 0a1.4 1.4 0 1 0 -2.7 0M455.3 275.8a1.4 1.4 0 1 0 2.7 0a1.4 1.4 0 1 0 -2.7 0M456.1 276.5a1.4 1.4 0 1 0 2.7 0a1.4 1.4 0 1 0 -2.7 0M456.9 275.6a1.4 1.4 0 1 0 2.7 0a1.4 1.4 0 1 0 -2.7 0M457.7 275.8a1.4 1.4 0 1 0 2.7 0a1.4 1.4 0 1 0 -2.7 0M458.5 274.9a1.4 1.4 0 1 0 2.7 0a1.4 1.4 0 1 0 -2.7 0M459.3 276.6a1.4 1.4 0 1 0 2.7 0a1.4 1.4 0 1 0 -2.7 0M460.1 275.1a1.4 1.4 0 1 0 2.7 0a1.4 1.4 0 1 0 -2.7 0M460.9 275.2a1.4 1.4 0 1 0 2.7 0a1.4 1.4 0 1 0 -2.7 0M461.7 275.4a1.4 1.4 0 1 0 2.7 0a1.4 1.4 0 1 0 -2.7 0M462.5 276.0a1.4 1.4 0 1 0 2.7 0a1.4 1.4 0 1 0 -2.7 0M463.3 274.7a1.4 1.4 0 1 0 2.7 0a1.4 1.4 0 1 0 -2.7 0M464.1 275.7a1.4 1.4 0 1 0 2.7 0a1.4 1.4 0 1 0 -2.7 0M464.9 274.5a1.4 1.4 0 1 0 2.7 0a1.4 1.4 0 1 0 -2.7 0M465.7 274.5a1.4 1.4 0 1 0 2.7 0a1.4 1.4 0 1 0 -2.7 0M466.5 274.3a1.4 1.4 0 1 0 2.7 0a1.4 1.4 0 1 0 -2.7 0M467.3 272.9a1.4 1.4 0 1 0 2.7 0a1.4 1.4 0 1 0 -2.7 0M468.1 273.8a1.4 1.4 0 1 0 2.7 0a1.4 1.4 0 1 0 -2.7 0M468.9 273.0a1.4 1.4 0 1 0 2.7 0a1.4 1.4 0 1 0 -2.7 0M469.7 272.4a1.4 1.4 0 1 0 2.7 0a1.4 1.4 0 1 0 -2.7 0M470.5 274.2a1.4 1.4 0 1 0 2.7 0a1.4 1.4 0 1 0 -2.7 0M471.3 272.5a1.4 1.4 0 1 0 2.7 0a1.4 1.4 0 1 0 -2.7 0M472.1 273.1a1.4 1.4 0 1 0 2.7 0a1.4 1.4 0 1 0 -2.7 0M472.9 273.5a1.4 1.4 0 1 0 2.7 0a1.4 1.4 0 1 0 -2.7 0M473.7 273.0a1.4 1.4 0 1 0 2.7 0a1.4 1.4 0 1 0 -2.7 0M474.5 272.3a1.4 1.4 0 1 0 2.7 0a1.4 1.4 0 1 0 -2.7 0M475.3 272.6a1.4 1.4 0 1 0 2.7 0a1.4 1.4 0 1 0 -2.7 0M476.1 272.5a1.4 1.4 0 1 0 2.7 0a1.4 1.4 0 1 0 -2.7 0M476.9 272.9a1.4 1.4 0 1 0 2.7 0a1.4 1.4 0 1 0 -2.7 0M477.7 271.1a1.4 1.4 0 1 0 2.7 0a1.4 1.4 0 1 0 -2.7 0M478.5 272.1a1.4 1.4 0 1 0 2.7 0a1.4 1.4 0 1 0 -2.7 0M479.3 271.2a1.4 1.4 0 1 0 2.7 0a1.4 1.4 0 1 0 -2.7 0M480.1 271.1a1.4 1.4 0 1 0 2.7 0a1.4 1.4 0 1 0 -2.7 0M480.9 272.2a1.4 1.4 0 1 0 2.7 0a1.4 1.4 0 1 0 -2.7 0M481.7 271.5a1.4 1.4 0 1 0 2.7 0a1.4 1.4 0 1 0 -2.7 0M482.5 271.5a1.4 1.4 0 1 0 2.7 0a1.4 1.4 0 1 0 -2.7 0M483.3 271.8a1.4 1.4 0 1 0 2.7 0a1.4 1.4 0 1 0 -2.7 0M484.1 272.1a1.4 1.4 0 1 0 2.7 0a1.4 1.4 0 1 0 -2.7 0M484.9 270.8a1.4 1.4 0 1 0 2.7 0a1.4 1.4 0 1 0 -2.7 0M485.7 271.1a1.4 1.4 0 1 0 2.7 0a1.4 1.4 0 1 0 -2.7 0M486.5 270.8a1.4 1.4 0 1 0 2.7 0a1.4 1.4 0 1 0 -2.7 0M487.3 270.7a1.4 1.4 0 1 0 2.7 0a1.4 1.4 0 1 0 -2.7 0M488.1 271.0a1.4 1.4 0 1 0 2.7 0a1.4 1.4 0 1 0 -2.7 0M488.9 270.3a1.4 1.4 0 1 0 2.7 0a1.4 1.4 0 1 0 -2.7 0M489.7 270.4a1.4 1.4 0 1 0 2.7 0a1.4 1.4 0 1 0 -2.7 0M490.5 270.1a1.4 1.4 0 1 0 2.7 0a1.4 1.4 0 1 0 -2.7 0M491.3 271.2a1.4 1.4 0 1 0 2.7 0a1.4 1.4 0 1 0 -2.7 0M492.1 270.5a1.4 1.4 0 1 0 2.7 0a1.4 1.4 0 1 0 -2.7 0M492.9 270.8a1.4 1.4 0 1 0 2.7 0a1.4 1.4 0 1 0 -2.7 0M493.7 270.9a1.4 1.4 0 1 0 2.7 0a1.4 1.4 0 1 0 -2.7 0M494.5 269.1a1.4 1.4 0 1 0 2.7 0a1.4 1.4 0 1 0 -2.7 0M495.3 269.8a1.4 1.4 0 1 0 2.7 0a1.4 1.4 0 1 0 -2.7 0M496.1 270.6a1.4 1.4 0 1 0 2.7 0a1.4 1.4 0 1 0 -2.7 0M496.9 270.2a1.4 1.4 0 1 0 2.7 0a1.4 1.4 0 1 0 -2.7 0M497.7 268.5a1.4 1.4 0 1 0 2.7 0a1.4 1.4 0 1 0 -2.7 0M498.5 268.3a1.4 1.4 0 1 0 2.7 0a1.4 1.4 0 1 0 -2.7 0M499.3 269.0a1.4 1.4 0 1 0 2.7 0a1.4 1.4 0 1 0 -2.7 0M500.1 268.0a1.4 1.4 0 1 0 2.7 0a1.4 1.4 0 1 0 -2.7 0M500.9 268.3a1.4 1.4 0 1 0 2.7 0a1.4 1.4 0 1 0 -2.7 0M501.7 267.9a1.4 1.4 0 1 0 2.7 0a1.4 1.4 0 1 0 -2.7 0M502.5 269.2a1.4 1.4 0 1 0 2.7 0a1.4 1.4 0 1 0 -2.7 0M503.3 269.4a1.4 1.4 0 1 0 2.7 0a1.4 1.4 0 1 0 -2.7 0M504.1 269.6a1.4 1.4 0 1 0 2.7 0a1.4 1.4 0 1 0 -2.7 0M504.9 267.7a1.4 1.4 0 1 0 2.7 0a1.4 1.4 0 1 0 -2.7 0M505.7 269.0a1.4 1.4 0 1 0 2.7 0a1.4 1.4 0 1 0 -2.7 0M506.5 268.7a1.4 1.4 0 1 0 2.7 0a1.4 1.4 0 1 0 -2.7 0M507.3 267.4a1.4 1.4 0 1 0 2.7 0a1.4 1.4 0 1 0 -2.7 0M508.1 269.1a1.4 1.4 0 1 0 2.7 0a1.4 1.4 0 1 0 -2.7 0M508.9 269.2a1.4 1.4 0 1 0 2.7 0a1.4 1.4 0 1 0 -2.7 0M509.7 267.3a1.4 1.4 0 1 0 2.7 0a1.4 1.4 0 1 0 -2.7 0M510.5 269.0a1.4 1.4 0 1 0 2.7 0a1.4 1.4 0 1 0 -2.7 0M511.3 267.6a1.4 1.4 0 1 0 2.7 0a1.4 1.4 0 1 0 -2.7 0M512.1 267.7a1.4 1.4 0 1 0 2.7 0a1.4 1.4 0 1 0 -2.7 0M512.9 268.8a1.4 1.4 0 1 0 2.7 0a1.4 1.4 0 1 0 -2.7 0M513.7 268.4a1.4 1.4 0 1 0 2.7 0a1.4 1.4 0 1 0 -2.7 0M514.5 266.7a1.4 1.4 0 1 0 2.7 0a1.4 1.4 0 1 0 -2.7 0M515.3 267.2a1.4 1.4 0 1 0 2.7 0a1.4 1.4 0 1 0 -2.7 0M516.1 267.3a1.4 1.4 0 1 0 2.7 0a1.4 1.4 0 1 0 -2.7 0M516.9 266.8a1.4 1.4 0 1 0 2.7 0a1.4 1.4 0 1 0 -2.7 0M517.7 266.4a1.4 1.4 0 1 0 2.7 0a1.4 1.4 0 1 0 -2.7 0M518.5 266.6a1.4 1.4 0 1 0 2.7 0a1.4 1.4 0 1 0 -2.7 0M519.3 267.5a1.4 1.4 0 1 0 2.7 0a1.4 1.4 0 1 0 -2.7 0M520.1 265.7a1.4 1.4 0 1 0 2.7 0a1.4 1.4 0 1 0 -2.7 0M520.9 266.9a1.4 1.4 0 1 0 2.7 0a1.4 1.4 0 1 0 -2.7 0M521.7 266.6a1.4 1.4 0 1 0 2.7 0a1.4 1.4 0 1 0 -2.7 0M522.5 265.5a1.4 1.4 0 1 0 2.7 0a1.4 1.4 0 1 0 -2.7 0M523.3 266.2a1.4 1.4 0 1 0 2.7 0a1.4 1.4 0 1 0 -2.7 0M524.1 266.8a1.4 1.4 0 1 0 2.7 0a1.4 1.4 0 1 0 -2.7 0M524.9 266.4a1.4 1.4 0 1 0 2.7 0a1.4 1.4 0 1 0 -2.7 0M525.7 265.3a1.4 1.4 0 1 0 2.7 0a1.4 1.4 0 1 0 -2.7 0M526.5 267.4a1.4 1.4 0 1 0 2.7 0a1.4 1.4 0 1 0 -2.7 0M527.3 266.8a1.4 1.4 0 1 0 2.7 0a1.4 1.4 0 1 0 -2.7 0M528.1 267.2a1.4 1.4 0 1 0 2.7 0a1.4 1.4 0 1 0 -2.7 0M528.9 265.0a1.4 1.4 0 1 0 2.7 0a1.4 1.4 0 1 0 -2.7 0M529.7 265.3a1.4 1.4 0 1 0 2.7 0a1.4 1.4 0 1 0 -2.7 0M530.5 264.7a1.4 1.4 0 1 0 2.7 0a1.4 1.4 0 1 0 -2.7 0M531.3 266.4a1.4 1.4 0 1 0 2.7 0a1.4 1.4 0 1 0 -2.7 0M532.1 265.1a1.4 1.4 0 1 0 2.7 0a1.4 1.4 0 1 0 -2.7 0M532.9 264.7a1.4 1.4 0 1 0 2.7 0a1.4 1.4 0 1 0 -2.7 0M533.7 265.3a1.4 1.4 0 1 0 2.7 0a1.4 1.4 0 1 0 -2.7 0M534.5 266.4a1.4 1.4 0 1 0 2.7 0a1.4 1.4 0 1 0 -2.7 0M535.3 266.1a1.4 1.4 0 1 0 2.7 0a1.4 1.4 0 1 0 -2.7 0M536.1 264.7a1.4 1.4 0 1 0 2.7 0a1.4 1.4 0 1 0 -2.7 0M536.9 264.4a1.4 1.4 0 1 0 2.7 0a1.4 1.4 0 1 0 -2.7 0M537.7 266.1a1.4 1.4 0 1 0 2.7 0a1.4 1.4 0 1 0 -2.7 0M538.5 265.2a1.4 1.4 0 1 0 2.7 0a1.4 1.4 0 1 0 -2.7 0M539.3 265.5a1.4 1.4 0 1 0 2.7 0a1.4 1.4 0 1 0 -2.7 0M540.1 263.9a1.4 1.4 0 1 0 2.7 0a1.4 1.4 0 1 0 -2.7 0M540.9 263.8a1.4 1.4 0 1 0 2.7 0a1.4 1.4 0 1 0 -2.7 0M541.7 265.2a1.4 1.4 0 1 0 2.7 0a1.4 1.4 0 1 0 -2.7 0M542.5 264.5a1.4 1.4 0 1 0 2.7 0a1.4 1.4 0 1 0 -2.7 0M543.2 263.6a1.4 1.4 0 1 0 2.7 0a1.4 1.4 0 1 0 -2.7 0M544.0 265.6a1.4 1.4 0 1 0 2.7 0a1.4 1.4 0 1 0 -2.7 0M544.8 264.7a1.4 1.4 0 1 0 2.7 0a1.4 1.4 0 1 0 -2.7 0M545.6 265.1a1.4 1.4 0 1 0 2.7 0a1.4 1.4 0 1 0 -2.7 0M546.4 263.3a1.4 1.4 0 1 0 2.7 0a1.4 1.4 0 1 0 -2.7 0M547.2 265.0a1.4 1.4 0 1 0 2.7 0a1.4 1.4 0 1 0 -2.7 0M548.0 263.1a1.4 1.4 0 1 0 2.7 0a1.4 1.4 0 1 0 -2.7 0M548.8 264.9a1.4 1.4 0 1 0 2.7 0a1.4 1.4 0 1 0 -2.7 0M549.6 263.8a1.4 1.4 0 1 0 2.7 0a1.4 1.4 0 1 0 -2.7 0M550.4 263.5a1.4 1.4 0 1 0 2.7 0a1.4 1.4 0 1 0 -2.7 0M551.2 263.9a1.4 1.4 0 1 0 2.7 0a1.4 1.4 0 1 0 -2.7 0M552.0 264.7a1.4 1.4 0 1 0 2.7 0a1.4 1.4 0 1 0 -2.7 0M552.8 263.1a1.4 1.4 0 1 0 2.7 0a1.4 1.4 0 1 0 -2.7 0M553.6 262.6a1.4 1.4 0 1 0 2.7 0a1.4 1.4 0 1 0 -2.7 0M554.4 263.5a1.4 1.4 0 1 0 2.7 0a1.4 1.4 0 1 0 -2.7 0M555.2 262.7a1.4 1.4 0 1 0 2.7 0a1.4 1.4 0 1 0 -2.7 0M556.0 262.3a1.4 1.4 0 1 0 2.7 0a1.4 1.4 0 1 0 -2.7 0M556.8 262.4a1.4 1.4 0 1 0 2.7 0a1.4 1.4 0 1 0 -2.7 0M557.6 262.0a1.4 1.4 0 1 0 2.7 0a1.4 1.4 0 1 0 -2.7 0M558.4 262.3a1.4 1.4 0 1 0 2.7 0a1.4 1.4 0 1 0 -2.7 0M559.2 262.5a1.4 1.4 0 1 0 2.7 0a1.4 1.4 0 1 0 -2.7 0M560.0 262.4a1.4 1.4 0 1 0 2.7 0a1.4 1.4 0 1 0 -2.7 0M560.8 263.4a1.4 1.4 0 1 0 2.7 0a1.4 1.4 0 1 0 -2.7 0M561.6 262.2a1.4 1.4 0 1 0 2.7 0a1.4 1.4 0 1 0 -2.7 0M562.4 262.6a1.4 1.4 0 1 0 2.7 0a1.4 1.4 0 1 0 -2.7 0M563.2 261.7a1.4 1.4 0 1 0 2.7 0a1.4 1.4 0 1 0 -2.7 0M564.0 262.0a1.4 1.4 0 1 0 2.7 0a1.4 1.4 0 1 0 -2.7 0M564.8 261.1a1.4 1.4 0 1 0 2.7 0a1.4 1.4 0 1 0 -2.7 0M565.6 261.6a1.4 1.4 0 1 0 2.7 0a1.4 1.4 0 1 0 -2.7 0M566.4 261.0a1.4 1.4 0 1 0 2.7 0a1.4 1.4 0 1 0 -2.7 0M567.2 262.6a1.4 1.4 0 1 0 2.7 0a1.4 1.4 0 1 0 -2.7 0M568.0 262.1a1.4 1.4 0 1 0 2.7 0a1.4 1.4 0 1 0 -2.7 0M568.8 261.1a1.4 1.4 0 1 0 2.7 0a1.4 1.4 0 1 0 -2.7 0M569.6 261.7a1.4 1.4 0 1 0 2.7 0a1.4 1.4 0 1 0 -2.7 0M570.4 262.7a1.4 1.4 0 1 0 2.7 0a1.4 1.4 0 1 0 -2.7 0M571.2 260.6a1.4 1.4 0 1 0 2.7 0a1.4 1.4 0 1 0 -2.7 0M572.0 262.2a1.4 1.4 0 1 0 2.7 0a1.4 1.4 0 1 0 -2.7 0M572.8 261.2a1.4 1.4 0 1 0 2.7 0a1.4 1.4 0 1 0 -2.7 0M573.6 261.3a1.4 1.4 0 1 0 2.7 0a1.4 1.4 0 1 0 -2.7 0M574.4 262.0a1.4 1.4 0 1 0 2.7 0a1.4 1.4 0 1 0 -2.7 0M575.2 260.9a1.4 1.4 0 1 0 2.7 0a1.4 1.4 0 1 0 -2.7 0M576.0 261.1a1.4 1.4 0 1 0 2.7 0a1.4 1.4 0 1 0 -2.7 0M576.8 261.4a1.4 1.4 0 1 0 2.7 0a1.4 1.4 0 1 0 -2.7 0M577.6 262.0a1.4 1.4 0 1 0 2.7 0a1.4 1.4 0 1 0 -2.7 0M578.4 260.4a1.4 1.4 0 1 0 2.7 0a1.4 1.4 0 1 0 -2.7 0M579.2 261.5a1.4 1.4 0 1 0 2.7 0a1.4 1.4 0 1 0 -2.7 0M580.0 261.2a1.4 1.4 0 1 0 2.7 0a1.4 1.4 0 1 0 -2.7 0M580.8 260.9a1.4 1.4 0 1 0 2.7 0a1.4 1.4 0 1 0 -2.7 0M581.6 260.3a1.4 1.4 0 1 0 2.7 0a1.4 1.4 0 1 0 -2.7 0M582.4 260.1a1.4 1.4 0 1 0 2.7 0a1.4 1.4 0 1 0 -2.7 0M583.2 259.4a1.4 1.4 0 1 0 2.7 0a1.4 1.4 0 1 0 -2.7 0M584.0 259.5a1.4 1.4 0 1 0 2.7 0a1.4 1.4 0 1 0 -2.7 0M584.8 259.3a1.4 1.4 0 1 0 2.7 0a1.4 1.4 0 1 0 -2.7 0M585.6 260.9a1.4 1.4 0 1 0 2.7 0a1.4 1.4 0 1 0 -2.7 0M586.4 259.6a1.4 1.4 0 1 0 2.7 0a1.4 1.4 0 1 0 -2.7 0M587.2 259.4a1.4 1.4 0 1 0 2.7 0a1.4 1.4 0 1 0 -2.7 0M588.0 259.2a1.4 1.4 0 1 0 2.7 0a1.4 1.4 0 1 0 -2.7 0M588.8 260.9a1.4 1.4 0 1 0 2.7 0a1.4 1.4 0 1 0 -2.7 0M589.6 261.0a1.4 1.4 0 1 0 2.7 0a1.4 1.4 0 1 0 -2.7 0M590.4 260.5a1.4 1.4 0 1 0 2.7 0a1.4 1.4 0 1 0 -2.7 0M591.2 259.5a1.4 1.4 0 1 0 2.7 0a1.4 1.4 0 1 0 -2.7 0M592.0 259.4a1.4 1.4 0 1 0 2.7 0a1.4 1.4 0 1 0 -2.7 0M592.8 259.5a1.4 1.4 0 1 0 2.7 0a1.4 1.4 0 1 0 -2.7 0M593.6 259.9a1.4 1.4 0 1 0 2.7 0a1.4 1.4 0 1 0 -2.7 0M594.4 259.2a1.4 1.4 0 1 0 2.7 0a1.4 1.4 0 1 0 -2.7 0M595.2 259.9a1.4 1.4 0 1 0 2.7 0a1.4 1.4 0 1 0 -2.7 0M596.0 259.5a1.4 1.4 0 1 0 2.7 0a1.4 1.4 0 1 0 -2.7 0M596.8 261.2a1.4 1.4 0 1 0 2.7 0a1.4 1.4 0 1 0 -2.7 0M597.6 261.2a1.4 1.4 0 1 0 2.7 0a1.4 1.4 0 1 0 -2.7 0M598.4 260.2a1.4 1.4 0 1 0 2.7 0a1.4 1.4 0 1 0 -2.7 0M599.2 259.5a1.4 1.4 0 1 0 2.7 0a1.4 1.4 0 1 0 -2.7 0M600.0 261.3a1.4 1.4 0 1 0 2.7 0a1.4 1.4 0 1 0 -2.7 0M600.8 259.8a1.4 1.4 0 1 0 2.7 0a1.4 1.4 0 1 0 -2.7 0M601.6 260.0a1.4 1.4 0 1 0 2.7 0a1.4 1.4 0 1 0 -2.7 0M602.4 259.2a1.4 1.4 0 1 0 2.7 0a1.4 1.4 0 1 0 -2.7 0M603.2 260.2a1.4 1.4 0 1 0 2.7 0a1.4 1.4 0 1 0 -2.7 0M604.0 260.5a1.4 1.4 0 1 0 2.7 0a1.4 1.4 0 1 0 -2.7 0M604.8 260.6a1.4 1.4 0 1 0 2.7 0a1.4 1.4 0 1 0 -2.7 0M605.6 260.0a1.4 1.4 0 1 0 2.7 0a1.4 1.4 0 1 0 -2.7 0M606.4 260.8a1.4 1.4 0 1 0 2.7 0a1.4 1.4 0 1 0 -2.7 0M607.2 259.8a1.4 1.4 0 1 0 2.7 0a1.4 1.4 0 1 0 -2.7 0M608.0 260.5a1.4 1.4 0 1 0 2.7 0a1.4 1.4 0 1 0 -2.7 0M608.8 260.2a1.4 1.4 0 1 0 2.7 0a1.4 1.4 0 1 0 -2.7 0M609.6 261.1a1.4 1.4 0 1 0 2.7 0a1.4 1.4 0 1 0 -2.7 0M610.4 260.4a1.4 1.4 0 1 0 2.7 0a1.4 1.4 0 1 0 -2.7 0M611.2 260.6a1.4 1.4 0 1 0 2.7 0a1.4 1.4 0 1 0 -2.7 0M612.0 261.4a1.4 1.4 0 1 0 2.7 0a1.4 1.4 0 1 0 -2.7 0M612.8 261.5a1.4 1.4 0 1 0 2.7 0a1.4 1.4 0 1 0 -2.7 0M613.6 262.5a1.4 1.4 0 1 0 2.7 0a1.4 1.4 0 1 0 -2.7 0M614.4 262.6a1.4 1.4 0 1 0 2.7 0a1.4 1.4 0 1 0 -2.7 0M615.2 263.4a1.4 1.4 0 1 0 2.7 0a1.4 1.4 0 1 0 -2.7 0M616.0 263.4a1.4 1.4 0 1 0 2.7 0a1.4 1.4 0 1 0 -2.7 0M616.8 263.8a1.4 1.4 0 1 0 2.7 0a1.4 1.4 0 1 0 -2.7 0M617.6 264.5a1.4 1.4 0 1 0 2.7 0a1.4 1.4 0 1 0 -2.7 0M618.4 263.6a1.4 1.4 0 1 0 2.7 0a1.4 1.4 0 1 0 -2.7 0M619.2 263.8a1.4 1.4 0 1 0 2.7 0a1.4 1.4 0 1 0 -2.7 0M620.0 265.7a1.4 1.4 0 1 0 2.7 0a1.4 1.4 0 1 0 -2.7 0M620.8 264.0a1.4 1.4 0 1 0 2.7 0a1.4 1.4 0 1 0 -2.7 0M621.6 265.7a1.4 1.4 0 1 0 2.7 0a1.4 1.4 0 1 0 -2.7 0M622.4 265.8a1.4 1.4 0 1 0 2.7 0a1.4 1.4 0 1 0 -2.7 0M623.2 264.8a1.4 1.4 0 1 0 2.7 0a1.4 1.4 0 1 0 -2.7 0M624.0 267.1a1.4 1.4 0 1 0 2.7 0a1.4 1.4 0 1 0 -2.7 0M624.8 267.6a1.4 1.4 0 1 0 2.7 0a1.4 1.4 0 1 0 -2.7 0M625.6 267.4a1.4 1.4 0 1 0 2.7 0a1.4 1.4 0 1 0 -2.7 0M626.4 268.1a1.4 1.4 0 1 0 2.7 0a1.4 1.4 0 1 0 -2.7 0M627.2 268.8a1.4 1.4 0 1 0 2.7 0a1.4 1.4 0 1 0 -2.7 0M628.0 267.7a1.4 1.4 0 1 0 2.7 0a1.4 1.4 0 1 0 -2.7 0M628.8 269.1a1.4 1.4 0 1 0 2.7 0a1.4 1.4 0 1 0 -2.7 0M629.6 269.5a1.4 1.4 0 1 0 2.7 0a1.4 1.4 0 1 0 -2.7 0M630.4 270.9a1.4 1.4 0 1 0 2.7 0a1.4 1.4 0 1 0 -2.7 0M631.2 271.4a1.4 1.4 0 1 0 2.7 0a1.4 1.4 0 1 0 -2.7 0M632.0 271.9a1.4 1.4 0 1 0 2.7 0a1.4 1.4 0 1 0 -2.7 0M632.8 272.0a1.4 1.4 0 1 0 2.7 0a1.4 1.4 0 1 0 -2.7 0M633.6 273.3a1.4 1.4 0 1 0 2.7 0a1.4 1.4 0 1 0 -2.7 0M634.4 273.4a1.4 1.4 0 1 0 2.7 0a1.4 1.4 0 1 0 -2.7 0M635.2 274.1a1.4 1.4 0 1 0 2.7 0a1.4 1.4 0 1 0 -2.7 0M636.0 273.6a1.4 1.4 0 1 0 2.7 0a1.4 1.4 0 1 0 -2.7 0M636.8 273.8a1.4 1.4 0 1 0 2.7 0a1.4 1.4 0 1 0 -2.7 0M637.6 274.7a1.4 1.4 0 1 0 2.7 0a1.4 1.4 0 1 0 -2.7 0M638.4 275.9a1.4 1.4 0 1 0 2.7 0a1.4 1.4 0 1 0 -2.7 0M639.2 275.9a1.4 1.4 0 1 0 2.7 0a1.4 1.4 0 1 0 -2.7 0M640.0 278.4a1.4 1.4 0 1 0 2.7 0a1.4 1.4 0 1 0 -2.7 0M640.8 278.4a1.4 1.4 0 1 0 2.7 0a1.4 1.4 0 1 0 -2.7 0M641.6 279.3a1.4 1.4 0 1 0 2.7 0a1.4 1.4 0 1 0 -2.7 0M642.4 280.0a1.4 1.4 0 1 0 2.7 0a1.4 1.4 0 1 0 -2.7 0M643.2 280.9a1.4 1.4 0 1 0 2.7 0a1.4 1.4 0 1 0 -2.7 0M644.0 281.1a1.4 1.4 0 1 0 2.7 0a1.4 1.4 0 1 0 -2.7 0M644.8 280.8a1.4 1.4 0 1 0 2.7 0a1.4 1.4 0 1 0 -2.7 0M645.6 283.5a1.4 1.4 0 1 0 2.7 0a1.4 1.4 0 1 0 -2.7 0M646.4 284.1a1.4 1.4 0 1 0 2.7 0a1.4 1.4 0 1 0 -2.7 0M647.2 284.3a1.4 1.4 0 1 0 2.7 0a1.4 1.4 0 1 0 -2.7 0M648.0 285.2a1.4 1.4 0 1 0 2.7 0a1.4 1.4 0 1 0 -2.7 0M648.8 286.2a1.4 1.4 0 1 0 2.7 0a1.4 1.4 0 1 0 -2.7 0M649.6 285.6a1.4 1.4 0 1 0 2.7 0a1.4 1.4 0 1 0 -2.7 0M650.4 287.9a1.4 1.4 0 1 0 2.7 0a1.4 1.4 0 1 0 -2.7 0M651.2 287.5a1.4 1.4 0 1 0 2.7 0a1.4 1.4 0 1 0 -2.7 0M652.0 287.7a1.4 1.4 0 1 0 2.7 0a1.4 1.4 0 1 0 -2.7 0M652.8 288.9a1.4 1.4 0 1 0 2.7 0a1.4 1.4 0 1 0 -2.7 0M653.2 300.0a1.4 1.4 0 1 0 2.7 0a1.4 1.4 0 1 0 -2.7 0M651.6 292.0a1.4 1.4 0 1 0 2.7 0a1.4 1.4 0 1 0 -2.7 0M654.6 289.0a1.4 1.4 0 1 0 2.7 0a1.4 1.4 0 1 0 -2.7 0" stroke="#18d4da" stroke-width="0.85" fill="none"/>
<path d="M315.7 368.0h2.6M317.0 366.7v2.6M316.7 366.6h2.6M318.0 365.3v2.6M317.6 365.0h2.6M318.9 363.7v2.6M318.6 363.5h2.6M319.9 362.2v2.6M319.6 361.9h2.6M320.9 360.6v2.6M320.6 360.3h2.6M321.9 359.0v2.6M321.5 358.7h2.6M322.8 357.4v2.6M322.5 357.0h2.6M323.8 355.7v2.6M323.5 355.3h2.6M324.8 354.0v2.6M324.4 353.6h2.6M325.7 352.3v2.6M325.4 351.8h2.6M326.7 350.5v2.6M326.4 350.0h2.6M327.7 348.7v2.6M327.3 348.2h2.6M328.6 346.9v2.6M328.3 346.2h2.6M329.6 344.9v2.6M329.3 344.0h2.6M330.6 342.7v2.6M330.3 341.7h2.6M331.6 340.4v2.6M331.2 339.2h2.6M332.5 337.9v2.6M332.2 336.6h2.6M333.5 335.3v2.6M333.2 333.7h2.6M334.5 332.4v2.6M334.1 330.8h2.6M335.4 329.5v2.6M335.1 327.9h2.6M336.4 326.6v2.6M336.1 325.1h2.6M337.4 323.8v2.6M337.0 322.3h2.6M338.3 321.0v2.6M338.0 319.7h2.6M339.3 318.4v2.6M339.0 317.1h2.6M340.3 315.8v2.6M340.0 314.5h2.6M341.3 313.2v2.6M340.9 312.0h2.6M342.2 310.7v2.6M341.9 309.4h2.6M343.2 308.1v2.6M342.9 306.9h2.6M344.2 305.6v2.6M343.8 304.3h2.6M345.1 303.0v2.6M344.8 301.7h2.6M346.1 300.4v2.6M345.8 298.9h2.6M347.1 297.6v2.6M346.7 295.8h2.6M348.0 294.5v2.6M347.7 292.4h2.6M349.0 291.1v2.6M348.7 288.6h2.6M350.0 287.3v2.6M349.7 284.9h2.6M351.0 283.6v2.6M350.6 281.4h2.6M351.9 280.1v2.6M351.6 278.1h2.6M352.9 276.8v2.6M352.6 274.8h2.6M353.9 273.5v2.6M353.5 271.6h2.6M354.8 270.3v2.6M354.5 268.4h2.6M355.8 267.1v2.6M355.5 265.1h2.6M356.8 263.8v2.6M356.4 261.9h2.6M357.7 260.6v2.6M357.4 258.7h2.6M358.7 257.4v2.6M358.4 255.4h2.6M359.7 254.1v2.6M359.4 252.2h2.6M360.7 250.9v2.6M360.3 248.9h2.6M361.6 247.6v2.6M361.3 245.6h2.6M362.6 244.3v2.6M362.3 242.3h2.6M363.6 241.0v2.6M363.2 239.0h2.6M364.5 237.7v2.6M364.2 235.7h2.6M365.5 234.4v2.6M365.2 232.4h2.6M366.5 231.1v2.6M366.1 229.2h2.6M367.4 227.9v2.6M367.1 226.0h2.6M368.4 224.7v2.6M368.1 222.7h2.6M369.4 221.4v2.6M369.1 219.7h2.6M370.4 218.4v2.6M370.0 216.7h2.6M371.3 215.4v2.6M371.0 213.8h2.6M372.3 212.5v2.6M372.0 211.1h2.6M373.3 209.8v2.6M372.9 208.5h2.6M374.2 207.2v2.6M373.9 205.9h2.6M375.2 204.6v2.6M374.9 203.4h2.6M376.2 202.1v2.6M375.8 200.9h2.6M377.1 199.6v2.6M376.8 198.7h2.6M378.1 197.4v2.6M377.8 196.8h2.6M379.1 195.5v2.6M378.8 195.5h2.6M380.1 194.2v2.6M379.7 194.6h2.6M381.0 193.3v2.6M380.7 193.9h2.6M382.0 192.6v2.6M381.7 193.3h2.6M383.0 192.0v2.6M382.6 192.9h2.6M383.9 191.6v2.6M383.6 192.6h2.6M384.9 191.3v2.6M384.6 192.3h2.6M385.9 191.0v2.6M385.5 192.0h2.6M386.8 190.7v2.6M386.5 191.8h2.6M387.8 190.5v2.6M387.5 191.6h2.6M388.8 190.3v2.6M388.5 191.3h2.6M389.8 190.0v2.6M389.4 191.1h2.6M390.7 189.8v2.6M390.4 190.9h2.6M391.7 189.6v2.6M391.4 190.8h2.6M392.7 189.5v2.6M392.3 190.6h2.6M393.6 189.3v2.6M393.3 190.4h2.6M394.6 189.1v2.6M394.3 190.3h2.6M395.6 189.0v2.6M395.2 190.1h2.6M396.5 188.8v2.6M396.2 190.0h2.6M397.5 188.7v2.6M397.2 189.8h2.6M398.5 188.5v2.6M398.2 189.7h2.6M399.5 188.4v2.6M399.1 189.5h2.6M400.4 188.2v2.6M400.1 189.4h2.6M401.4 188.1v2.6M401.1 189.3h2.6M402.4 188.0v2.6M402.0 189.1h2.6M403.3 187.8v2.6M403.0 189.0h2.6M404.3 187.7v2.6M404.0 188.9h2.6M405.3 187.6v2.6M404.9 188.7h2.6M406.2 187.4v2.6M405.9 188.6h2.6M407.2 187.3v2.6M406.9 188.5h2.6M408.2 187.2v2.6M407.9 188.3h2.6M409.2 187.0v2.6M408.8 188.2h2.6M410.1 186.9v2.6M409.8 188.1h2.6M411.1 186.8v2.6M410.8 188.0h2.6M412.1 186.7v2.6M411.7 187.8h2.6M413.0 186.5v2.6M412.7 187.7h2.6M414.0 186.4v2.6M413.7 187.6h2.6M415.0 186.3v2.6M414.6 187.5h2.6M415.9 186.2v2.6M415.6 187.3h2.6M416.9 186.0v2.6M416.6 187.2h2.6M417.9 185.9v2.6M417.6 187.1h2.6M418.9 185.8v2.6M418.5 186.9h2.6M419.8 185.6v2.6M419.5 186.8h2.6M420.8 185.5v2.6M420.5 186.7h2.6M421.8 185.4v2.6M421.4 186.6h2.6M422.7 185.3v2.6M422.4 186.4h2.6M423.7 185.1v2.6M423.4 186.3h2.6M424.7 185.0v2.6M424.3 186.2h2.6M425.6 184.9v2.6M425.3 186.1h2.6M426.6 184.8v2.6M426.3 186.0h2.6M427.6 184.7v2.6M427.3 185.9h2.6M428.6 184.6v2.6M428.2 185.7h2.6M429.5 184.4v2.6M429.2 185.6h2.6M430.5 184.3v2.6M430.2 185.5h2.6M431.5 184.2v2.6M431.1 185.4h2.6M432.4 184.1v2.6M432.1 185.3h2.6M433.4 184.0v2.6M433.1 185.2h2.6M434.4 183.9v2.6M434.0 185.1h2.6M435.3 183.8v2.6M435.0 185.0h2.6M436.3 183.7v2.6M436.0 184.9h2.6M437.3 183.6v2.6M437.0 184.8h2.6M438.3 183.5v2.6M437.9 184.7h2.6M439.2 183.4v2.6M438.9 184.6h2.6M440.2 183.3v2.6M439.9 184.5h2.6M441.2 183.2v2.6M440.8 184.4h2.6M442.1 183.1v2.6M441.8 184.3h2.6M443.1 183.0v2.6M442.8 184.2h2.6M444.1 182.9v2.6M443.7 184.1h2.6M445.0 182.8v2.6M444.7 184.0h2.6M446.0 182.7v2.6M445.7 183.9h2.6M447.0 182.6v2.6M446.7 183.8h2.6M448.0 182.5v2.6M447.6 183.7h2.6M448.9 182.4v2.6M448.6 183.7h2.6M449.9 182.4v2.6M449.6 183.6h2.6M450.9 182.3v2.6M450.5 183.5h2.6M451.8 182.2v2.6M451.5 183.4h2.6M452.8 182.1v2.6M452.5 183.3h2.6M453.8 182.0v2.6M453.4 183.2h2.6M454.7 181.9v2.6M454.4 183.1h2.6M455.7 181.8v2.6M455.4 183.0h2.6M456.7 181.7v2.6M456.4 183.0h2.6M457.7 181.7v2.6M457.3 182.9h2.6M458.6 181.6v2.6M458.3 182.8h2.6M459.6 181.5v2.6M459.3 182.7h2.6M460.6 181.4v2.6M460.2 182.6h2.6M461.5 181.3v2.6M461.2 182.5h2.6M462.5 181.2v2.6M462.2 182.4h2.6M463.5 181.1v2.6M463.1 182.4h2.6M464.4 181.1v2.6M464.1 182.3h2.6M465.4 181.0v2.6M465.1 182.2h2.6M466.4 180.9v2.6M466.1 182.1h2.6M467.4 180.8v2.6M467.0 182.0h2.6M468.3 180.7v2.6M468.0 181.9h2.6M469.3 180.6v2.6M469.0 181.9h2.6M470.3 180.6v2.6M469.9 181.8h2.6M471.2 180.5v2.6M470.9 181.7h2.6M472.2 180.4v2.6M471.9 181.6h2.6M473.2 180.3v2.6M472.8 181.5h2.6M474.1 180.2v2.6M473.8 181.4h2.6M475.1 180.1v2.6M474.8 181.3h2.6M476.1 180.0v2.6M475.8 181.3h2.6M477.1 180.0v2.6M476.7 181.2h2.6M478.0 179.9v2.6M477.7 181.1h2.6M479.0 179.8v2.6M478.7 181.0h2.6M480.0 179.7v2.6M479.6 180.9h2.6M480.9 179.6v2.6M480.6 180.8h2.6M481.9 179.5v2.6M481.6 180.8h2.6M482.9 179.5v2.6M482.5 180.7h2.6M483.8 179.4v2.6M483.5 180.6h2.6M484.8 179.3v2.6M484.5 180.5h2.6M485.8 179.2v2.6M485.5 180.4h2.6M486.8 179.1v2.6M486.4 180.3h2.6M487.7 179.0v2.6M487.4 180.2h2.6M488.7 178.9v2.6M488.4 180.2h2.6M489.7 178.9v2.6M489.3 180.1h2.6M490.6 178.8v2.6M490.3 180.0h2.6M491.6 178.7v2.6M491.3 179.9h2.6M492.6 178.6v2.6M492.2 179.8h2.6M493.5 178.5v2.6M493.2 179.7h2.6M494.5 178.4v2.6M494.2 179.7h2.6M495.5 178.4v2.6M495.2 179.6h2.6M496.5 178.3v2.6M496.1 179.5h2.6M497.4 178.2v2.6M497.1 179.4h2.6M498.4 178.1v2.6M498.1 179.3h2.6M499.4 178.0v2.6M499.0 179.2h2.6M500.3 177.9v2.6M500.0 179.1h2.6M501.3 177.8v2.6M501.0 179.1h2.6M502.3 177.8v2.6M501.9 179.0h2.6M503.2 177.7v2.6M502.9 178.9h2.6M504.2 177.6v2.6M503.9 178.8h2.6M505.2 177.5v2.6M504.9 178.7h2.6M506.2 177.4v2.6M505.8 178.6h2.6M507.1 177.3v2.6M506.8 178.6h2.6M508.1 177.3v2.6M507.8 178.5h2.6M509.1 177.2v2.6M508.7 178.4h2.6M510.0 177.1v2.6M509.7 178.3h2.6M511.0 177.0v2.6M510.7 178.2h2.6M512.0 176.9v2.6M511.6 178.1h2.6M512.9 176.8v2.6M512.6 178.0h2.6M513.9 176.7v2.6M513.6 178.0h2.6M514.9 176.7v2.6M514.6 177.9h2.6M515.9 176.6v2.6M515.5 177.8h2.6M516.8 176.5v2.6M516.5 177.7h2.6M517.8 176.4v2.6M517.5 177.6h2.6M518.8 176.3v2.6M518.4 177.5h2.6M519.7 176.2v2.6M519.4 177.4h2.6M520.7 176.1v2.6M520.4 177.4h2.6M521.7 176.1v2.6M521.3 177.3h2.6M522.6 176.0v2.6M522.3 177.2h2.6M523.6 175.9v2.6M523.3 177.1h2.6M524.6 175.8v2.6M524.3 177.0h2.6M525.6 175.7v2.6M525.2 176.9h2.6M526.5 175.6v2.6M526.2 176.8h2.6M527.5 175.5v2.6M527.2 176.8h2.6M528.5 175.5v2.6M528.1 176.7h2.6M529.4 175.4v2.6M529.1 176.6h2.6M530.4 175.3v2.6M530.1 176.5h2.6M531.4 175.2v2.6M531.0 176.4h2.6M532.3 175.1v2.6M532.0 176.3h2.6M533.3 175.0v2.6M533.0 176.2h2.6M534.3 174.9v2.6M534.0 176.1h2.6M535.3 174.8v2.6M534.9 176.1h2.6M536.2 174.8v2.6M535.9 176.0h2.6M537.2 174.7v2.6M536.9 175.9h2.6M538.2 174.6v2.6M537.8 175.8h2.6M539.1 174.5v2.6M538.8 175.7h2.6M540.1 174.4v2.6M539.8 175.6h2.6M541.1 174.3v2.6M540.7 175.5h2.6M542.0 174.2v2.6M541.7 175.5h2.6M543.0 174.2v2.6M542.7 175.4h2.6M544.0 174.1v2.6M543.7 175.3h2.6M545.0 174.0v2.6M544.6 175.2h2.6M545.9 173.9v2.6M545.6 175.1h2.6M546.9 173.8v2.6M546.6 175.0h2.6M547.9 173.7v2.6M547.5 174.9h2.6M548.8 173.6v2.6M548.5 174.8h2.6M549.8 173.5v2.6M549.5 174.8h2.6M550.8 173.5v2.6M550.4 174.7h2.6M551.7 173.4v2.6M551.4 174.6h2.6M552.7 173.3v2.6M552.4 174.5h2.6M553.7 173.2v2.6M553.4 174.4h2.6M554.7 173.1v2.6M554.3 174.3h2.6M555.6 173.0v2.6M555.3 174.2h2.6M556.6 172.9v2.6M556.3 174.1h2.6M557.6 172.8v2.6M557.2 174.1h2.6M558.5 172.8v2.6M558.2 174.0h2.6M559.5 172.7v2.6M559.2 173.9h2.6M560.5 172.6v2.6M560.1 173.8h2.6M561.4 172.5v2.6M561.1 173.7h2.6M562.4 172.4v2.6M562.1 173.6h2.6M563.4 172.3v2.6M563.1 173.5h2.6M564.4 172.2v2.6M564.0 173.4h2.6M565.3 172.1v2.6M565.0 173.4h2.6M566.3 172.1v2.6M566.0 173.3h2.6M567.3 172.0v2.6M566.9 173.2h2.6M568.2 171.9v2.6M567.9 173.1h2.6M569.2 171.8v2.6M568.9 173.0h2.6M570.2 171.7v2.6M569.8 172.9h2.6M571.1 171.6v2.6M570.8 172.8h2.6M572.1 171.5v2.6M571.8 172.7h2.6M573.1 171.4v2.6M572.8 172.7h2.6M574.1 171.4v2.6M573.7 172.6h2.6M575.0 171.3v2.6M574.7 172.5h2.6M576.0 171.2v2.6M575.7 172.4h2.6M577.0 171.1v2.6M576.6 172.3h2.6M577.9 171.0v2.6M577.6 172.2h2.6M578.9 170.9v2.6M578.6 172.1h2.6M579.9 170.8v2.6M579.5 172.1h2.6M580.8 170.8v2.6M580.5 172.0h2.6M581.8 170.7v2.6M581.5 171.9h2.6M582.8 170.6v2.6M582.5 171.8h2.6M583.8 170.5v2.6M583.4 171.7h2.6M584.7 170.4v2.6M584.4 171.6h2.6M585.7 170.3v2.6M585.4 171.5h2.6M586.7 170.2v2.6M586.3 171.4h2.6M587.6 170.1v2.6M587.3 171.4h2.6M588.6 170.1v2.6M588.3 171.3h2.6M589.6 170.0v2.6M589.2 171.2h2.6M590.5 169.9v2.6M590.2 171.1h2.6M591.5 169.8v2.6M591.2 171.0h2.6M592.5 169.7v2.6M592.2 170.9h2.6M593.5 169.6v2.6M593.1 170.8h2.6M594.4 169.5v2.6M594.1 170.8h2.6M595.4 169.5v2.6M595.1 170.7h2.6M596.4 169.4v2.6M596.0 170.6h2.6M597.3 169.3v2.6M597.0 170.5h2.6M598.3 169.2v2.6M598.0 170.4h2.6M599.3 169.1v2.6M598.9 170.4h2.6M600.2 169.1v2.6M599.9 170.3h2.6M601.2 169.0v2.6M600.9 170.2h2.6M602.2 168.9v2.6M601.9 170.1h2.6M603.2 168.8v2.6M602.8 170.0h2.6M604.1 168.7v2.6M603.8 170.0h2.6M605.1 168.7v2.6M604.8 169.9h2.6M606.1 168.6v2.6M605.7 169.8h2.6M607.0 168.5v2.6M606.7 169.7h2.6M608.0 168.4v2.6M607.7 169.7h2.6M609.0 168.4v2.6M608.6 169.6h2.6M609.9 168.3v2.6M609.6 169.5h2.6M610.9 168.2v2.6M610.6 169.4h2.6M611.9 168.1v2.6M611.6 169.4h2.6M612.9 168.1v2.6M612.5 169.3h2.6M613.8 168.0v2.6M613.5 169.2h2.6M614.8 167.9v2.6M614.5 169.2h2.6M615.8 167.9v2.6M615.4 169.1h2.6M616.7 167.8v2.6M616.4 169.0h2.6M617.7 167.7v2.6M617.4 169.0h2.6M618.7 167.7v2.6M618.3 168.9h2.6M619.6 167.6v2.6M619.3 168.8h2.6M620.6 167.5v2.6M620.3 168.8h2.6M621.6 167.5v2.6M621.3 168.7h2.6M622.6 167.4v2.6M622.2 168.7h2.6M623.5 167.4v2.6M623.2 168.6h2.6M624.5 167.3v2.6M624.2 168.6h2.6M625.5 167.3v2.6M625.1 168.5h2.6M626.4 167.2v2.6M626.1 168.5h2.6M627.4 167.2v2.6M627.1 168.4h2.6M628.4 167.1v2.6M628.0 168.4h2.6M629.3 167.1v2.6M629.0 168.3h2.6M630.3 167.0v2.6M630.0 168.3h2.6M631.3 167.0v2.6M631.0 168.2h2.6M632.3 166.9v2.6M631.9 168.2h2.6M633.2 166.9v2.6M632.9 168.1h2.6M634.2 166.8v2.6M633.9 168.1h2.6M635.2 166.8v2.6M634.8 168.0h2.6M636.1 166.7v2.6M635.8 168.0h2.6M637.1 166.7v2.6M636.8 167.9h2.6M638.1 166.6v2.6M637.7 167.9h2.6M639.0 166.6v2.6M638.7 167.9h2.6M640.0 166.6v2.6M639.7 167.8h2.6M641.0 166.5v2.6M640.7 167.8h2.6M642.0 166.5v2.6M641.6 167.7h2.6M642.9 166.4v2.6M642.6 167.7h2.6M643.9 166.4v2.6M643.6 167.7h2.6M644.9 166.4v2.6M644.5 167.6h2.6M645.8 166.3v2.6M645.5 167.6h2.6M646.8 166.3v2.6M646.5 167.6h2.6M647.8 166.3v2.6M647.4 167.5h2.6M648.7 166.2v2.6M648.4 167.5h2.6M649.7 166.2v2.6M649.4 167.5h2.6M650.7 166.2v2.6M650.4 167.4h2.6M651.7 166.1v2.6M651.3 167.4h2.6M652.6 166.1v2.6M652.3 167.4h2.6M653.6 166.1v2.6M653.3 167.4h2.6M654.6 166.1v2.6M654.2 167.3h2.6M655.5 166.0v2.6M320.2 358.2h2.6M321.5 356.9v2.6M321.7 357.2h2.6M323.0 355.9v2.6M323.3 356.3h2.6M324.6 355.0v2.6M324.9 355.2h2.6M326.2 353.9v2.6M326.5 354.2h2.6M327.8 352.9v2.6M328.1 353.4h2.6M329.4 352.1v2.6" stroke="#f6a834" stroke-width="0.95" fill="none"/>
</svg>

<!-- Standard Oil Test window -->
<div class="win" style="left:782px;top:86.2px;width:169px;height:258px;background:#6070cc;">
  <div class="wt" style="width:169px;height:16px;background:linear-gradient(#2a6cf0,#0a50e4 30%,#0a50e4);"></div>
  <div style="left:2px;top:15.7px;width:165.2px;height:240.6px;background:#fff;"></div>
  <span class="t wtt" style="transform:scaleX(0.902);left:54.8px;top:3.6px;font-size:8px;">Standard Oil Test</span>
</div>

<!-- Semi-Log window -->
<div class="win" style="left:80.4px;top:384.6px;width:425.4px;height:264.9px;background:#7e8ee0;">
  <div class="wt" style="width:425.4px;height:19.5px;background:linear-gradient(#90acf0 0%,#7698e8 25%,#7494e6 100%);"></div>
  <div style="left:2.1px;top:19px;width:420.8px;height:243.6px;background:#dcdcf4;"></div>
  <span class="t wtt" style="transform:scaleX(0.861);left:3.6px;top:5.8px;color:#e6ecfc;">Semi-Log plot</span>
</div>
<svg style="left:472.3px;top:389px" width="30" height="14" viewBox="0 0 30 14"><rect x="0.6" y="0.6" width="13.4" height="12.4" rx="1.5" fill="#6686e6" stroke="#c8d6f8" stroke-width="0.8"/><rect x="4" y="3.6" width="6.6" height="6.4" fill="none" stroke="#fff" stroke-width="1"/><path d="M4 4.4H10.6" stroke="#fff" stroke-width="1.6"/><rect x="15" y="0.6" width="13.4" height="12.4" rx="1.5" fill="#c85470" stroke="#e4b8c8" stroke-width="0.8"/><path d="M18.6 3.8L24.6 9.8M24.6 3.8L18.6 9.8" stroke="#fff" stroke-width="1.6"/></svg>
<svg class="plot" style="left:83.6px;top:405px" width="418.2" height="240.6" viewBox="83.6 405 418.2 240.6">
<rect x="83.6" y="405" width="418.2" height="240.6" fill="#000"/>
<path d="M100.5 635.0h2.6M101.8 633.7v2.6M164.6 635.0h2.6M165.9 633.7v2.6M180.7 635.0h2.6M182.0 633.7v2.6M189.4 635.0h2.6M190.7 633.7v2.6M196.7 635.0h2.6M198.0 633.7v2.6M202.7 635.0h2.6M204.0 633.7v2.6M207.7 635.0h2.6M209.0 633.7v2.6M212.0 635.0h2.6M213.3 633.7v2.6M215.7 635.0h2.6M217.0 633.7v2.6M218.9 635.0h2.6M220.2 633.7v2.6M221.6 635.0h2.6M222.9 633.7v2.6M224.0 635.0h2.6M225.3 633.7v2.6M226.0 635.0h2.6M227.3 633.7v2.6M227.7 635.0h2.6M229.0 633.7v2.6M229.2 635.0h2.6M230.5 633.7v2.6M230.5 635.0h2.6M231.8 633.7v2.6M231.6 635.0h2.6M232.9 633.7v2.6M232.6 635.0h2.6M233.9 633.7v2.6M233.5 635.0h2.6M234.8 633.7v2.6M234.4 635.0h2.6M235.7 633.7v2.6M235.3 635.0h2.6M236.6 633.7v2.6M236.2 635.0h2.6M237.5 633.7v2.6M237.1 635.0h2.6M238.4 633.7v2.6M238.0 635.0h2.6M239.3 633.7v2.6M238.9 634.8h2.6M240.2 633.5v2.6M239.8 634.8h2.6M241.1 633.5v2.6M240.7 634.8h2.6M242.0 633.5v2.6M241.6 634.8h2.6M242.9 633.5v2.6M242.5 634.8h2.6M243.8 633.5v2.6M243.4 634.8h2.6M244.7 633.5v2.6M244.3 634.8h2.6M245.6 633.5v2.6M245.2 634.8h2.6M246.5 633.5v2.6M246.1 634.8h2.6M247.4 633.5v2.6M247.0 634.8h2.6M248.3 633.5v2.6M247.9 634.8h2.6M249.2 633.5v2.6M248.8 634.8h2.6M250.1 633.5v2.6M249.7 634.8h2.6M251.0 633.5v2.6M250.6 634.8h2.6M251.9 633.5v2.6M251.5 634.8h2.6M252.8 633.5v2.6M252.4 634.8h2.6M253.7 633.5v2.6M253.3 634.8h2.6M254.6 633.5v2.6M254.2 634.8h2.6M255.5 633.5v2.6M255.1 634.8h2.6M256.4 633.5v2.6M255.7 634.8h2.6M257.0 633.5v2.6M257.2 634.4h2.6M258.5 633.1v2.6M258.7 633.9h2.6M260.0 632.6v2.6M260.1 633.5h2.6M261.4 632.2v2.6M261.6 633.0h2.6M262.9 631.7v2.6M263.1 632.5h2.6M264.4 631.2v2.6M264.5 631.9h2.6M265.8 630.6v2.6M265.9 631.2h2.6M267.2 629.9v2.6M267.2 630.5h2.6M268.5 629.2v2.6M268.4 629.5h2.6M269.7 628.2v2.6M269.5 628.5h2.6M270.8 627.2v2.6M270.5 627.3h2.6M271.8 626.0v2.6M271.4 626.0h2.6M272.7 624.7v2.6M272.2 624.7h2.6M273.5 623.4v2.6M272.9 623.3h2.6M274.2 622.0v2.6M273.7 622.0h2.6M275.0 620.7v2.6M273.7 622.0h2.6M275.0 620.7v2.6M274.6 619.1h2.6M275.9 617.8v2.6M275.4 616.2h2.6M276.7 614.9v2.6M276.2 613.4h2.6M277.5 612.1v2.6M276.9 610.4h2.6M278.2 609.1v2.6M277.5 607.5h2.6M278.8 606.2v2.6M278.0 604.5h2.6M279.3 603.2v2.6M278.6 601.6h2.6M279.9 600.3v2.6M279.0 598.6h2.6M280.3 597.3v2.6M279.5 595.6h2.6M280.8 594.3v2.6M279.9 592.7h2.6M281.2 591.4v2.6M280.3 589.7h2.6M281.6 588.4v2.6M280.6 586.7h2.6M281.9 585.4v2.6M281.0 583.7h2.6M282.3 582.4v2.6M281.3 580.8h2.6M282.6 579.5v2.6M281.7 577.8h2.6M283.0 576.5v2.6M282.0 574.8h2.6M283.3 573.5v2.6M282.3 571.8h2.6M283.6 570.5v2.6M282.6 568.8h2.6M283.9 567.5v2.6M282.8 565.8h2.6M284.1 564.5v2.6M283.1 562.8h2.6M284.4 561.5v2.6M283.4 559.8h2.6M284.7 558.5v2.6M283.7 556.8h2.6M285.0 555.5v2.6M283.9 553.9h2.6M285.2 552.6v2.6M284.2 550.9h2.6M285.5 549.6v2.6M284.5 547.9h2.6M285.8 546.6v2.6M284.8 544.9h2.6M286.1 543.6v2.6M285.2 541.9h2.6M286.5 540.6v2.6M285.7 539.0h2.6M287.0 537.7v2.6M286.2 536.0h2.6M287.5 534.7v2.6M286.2 536.0h2.6M287.5 534.7v2.6M286.5 535.1h2.6M287.8 533.8v2.6M286.8 534.3h2.6M288.1 533.0v2.6M287.1 533.4h2.6M288.4 532.1v2.6M287.4 532.5h2.6M288.7 531.2v2.6M287.8 531.6h2.6M289.1 530.3v2.6M288.1 530.8h2.6M289.4 529.5v2.6M288.4 529.9h2.6M289.7 528.6v2.6M288.8 529.1h2.6M290.1 527.8v2.6M289.2 528.2h2.6M290.5 526.9v2.6M289.6 527.4h2.6M290.9 526.1v2.6M290.0 526.5h2.6M291.3 525.2v2.6M290.4 525.7h2.6M291.7 524.4v2.6M290.8 524.9h2.6M292.1 523.6v2.6M291.3 524.1h2.6M292.6 522.8v2.6M291.8 523.3h2.6M293.1 522.0v2.6M292.3 522.5h2.6M293.6 521.2v2.6M292.8 521.8h2.6M294.1 520.5v2.6M293.4 521.0h2.6M294.7 519.7v2.6M293.9 520.3h2.6M295.2 519.0v2.6M294.5 519.5h2.6M295.8 518.2v2.6M295.1 518.8h2.6M296.4 517.5v2.6M295.7 518.1h2.6M297.0 516.8v2.6M296.3 517.4h2.6M297.6 516.1v2.6M297.0 516.8h2.6M298.3 515.5v2.6M297.6 516.1h2.6M298.9 514.8v2.6M298.3 515.5h2.6M299.6 514.2v2.6M299.0 514.9h2.6M300.3 513.6v2.6M299.7 514.3h2.6M301.0 513.0v2.6M300.4 513.7h2.6M301.7 512.4v2.6M301.1 513.1h2.6M302.4 511.8v2.6M301.9 512.5h2.6M303.2 511.2v2.6M302.6 512.0h2.6M303.9 510.7v2.6M303.4 511.4h2.6M304.7 510.1v2.6M304.2 510.9h2.6M305.5 509.6v2.6M304.9 510.5h2.6M306.2 509.2v2.6M305.7 510.0h2.6M307.0 508.7v2.6M306.5 509.5h2.6M307.8 508.2v2.6M307.3 509.0h2.6M308.6 507.7v2.6M308.1 508.6h2.6M309.4 507.3v2.6M308.9 508.1h2.6M310.2 506.8v2.6M309.8 507.7h2.6M311.1 506.4v2.6M310.6 507.3h2.6M311.9 506.0v2.6M311.4 506.9h2.6M312.7 505.6v2.6M312.3 506.5h2.6M313.6 505.2v2.6M313.1 506.1h2.6M314.4 504.8v2.6M313.9 505.7h2.6M315.2 504.4v2.6M314.8 505.3h2.6M316.1 504.0v2.6M315.6 504.9h2.6M316.9 503.6v2.6M316.5 504.5h2.6M317.8 503.2v2.6M317.3 504.1h2.6M318.6 502.8v2.6M318.1 503.7h2.6M319.4 502.4v2.6M319.0 503.3h2.6M320.3 502.0v2.6M319.8 502.9h2.6M321.1 501.6v2.6M320.7 502.5h2.6M322.0 501.2v2.6M321.5 502.1h2.6M322.8 500.8v2.6M322.3 501.7h2.6M323.6 500.4v2.6M323.2 501.3h2.6M324.5 500.0v2.6M324.0 500.9h2.6M325.3 499.6v2.6M324.8 500.5h2.6M326.1 499.2v2.6M325.7 500.1h2.6M327.0 498.8v2.6M326.5 499.7h2.6M327.8 498.4v2.6M327.3 499.3h2.6M328.6 498.0v2.6M328.1 498.8h2.6M329.4 497.5v2.6M329.0 498.4h2.6M330.3 497.1v2.6M329.8 498.0h2.6M331.1 496.7v2.6M330.6 497.6h2.6M331.9 496.3v2.6M331.5 497.2h2.6M332.8 495.9v2.6M332.3 496.7h2.6M333.6 495.4v2.6M333.1 496.3h2.6M334.4 495.0v2.6M333.9 495.9h2.6M335.2 494.6v2.6M334.8 495.5h2.6M336.1 494.2v2.6M335.6 495.1h2.6M336.9 493.8v2.6M336.4 494.7h2.6M337.7 493.4v2.6M337.3 494.3h2.6M338.6 493.0v2.6M338.1 493.9h2.6M339.4 492.6v2.6M338.9 493.5h2.6M340.2 492.2v2.6M339.8 493.1h2.6M341.1 491.8v2.6M340.6 492.7h2.6M341.9 491.4v2.6M341.4 492.3h2.6M342.7 491.0v2.6M342.3 491.9h2.6M343.6 490.6v2.6M343.1 491.5h2.6M344.4 490.2v2.6M343.9 491.1h2.6M345.2 489.8v2.6M344.8 490.6h2.6M346.1 489.3v2.6M345.6 490.2h2.6M346.9 488.9v2.6M346.4 489.8h2.6M347.7 488.5v2.6M347.2 489.3h2.6M348.5 488.0v2.6M348.1 488.9h2.6M349.4 487.6v2.6M348.9 488.5h2.6M350.2 487.2v2.6M349.7 488.0h2.6M351.0 486.7v2.6M350.5 487.6h2.6M351.8 486.3v2.6M351.3 487.1h2.6M352.6 485.8v2.6M352.1 486.7h2.6M353.4 485.4v2.6M352.9 486.2h2.6M354.2 484.9v2.6M353.7 485.8h2.6M355.0 484.5v2.6M354.5 485.3h2.6M355.8 484.0v2.6M355.3 484.8h2.6M356.6 483.5v2.6M356.1 484.4h2.6M357.4 483.1v2.6M356.9 483.9h2.6M358.2 482.6v2.6M357.7 483.4h2.6M359.0 482.1v2.6M358.5 483.0h2.6M359.8 481.7v2.6M359.3 482.5h2.6M360.6 481.2v2.6M360.1 482.0h2.6M361.4 480.7v2.6M360.9 481.5h2.6M362.2 480.2v2.6M361.7 481.1h2.6M363.0 479.8v2.6M362.5 480.6h2.6M363.8 479.3v2.6M363.3 480.1h2.6M364.6 478.8v2.6M364.1 479.6h2.6M365.4 478.3v2.6M364.9 479.1h2.6M366.2 477.8v2.6M365.7 478.7h2.6M367.0 477.4v2.6M366.5 478.2h2.6M367.8 476.9v2.6M367.3 477.7h2.6M368.6 476.4v2.6M368.1 477.2h2.6M369.4 475.9v2.6M368.9 476.7h2.6M370.2 475.4v2.6M369.7 476.2h2.6M371.0 474.9v2.6M370.4 475.8h2.6M371.7 474.5v2.6M371.2 475.3h2.6M372.5 474.0v2.6M372.0 474.8h2.6M373.3 473.5v2.6M372.8 474.3h2.6M374.1 473.0v2.6M373.6 473.8h2.6M374.9 472.5v2.6M374.4 473.3h2.6M375.7 472.0v2.6M375.2 472.8h2.6M376.5 471.5v2.6M375.9 472.3h2.6M377.2 471.0v2.6M376.7 471.8h2.6M378.0 470.5v2.6M377.5 471.3h2.6M378.8 470.0v2.6M378.3 470.8h2.6M379.6 469.5v2.6M379.1 470.3h2.6M380.4 469.0v2.6M379.8 469.8h2.6M381.1 468.5v2.6M380.6 469.3h2.6M381.9 468.0v2.6M381.4 468.8h2.6M382.7 467.5v2.6M382.2 468.3h2.6M383.5 467.0v2.6M383.0 467.8h2.6M384.3 466.5v2.6M383.7 467.3h2.6M385.0 466.0v2.6M384.5 466.8h2.6M385.8 465.5v2.6M385.3 466.3h2.6M386.6 465.0v2.6M386.1 465.8h2.6M387.4 464.5v2.6M386.8 465.3h2.6M388.1 464.0v2.6M387.6 464.8h2.6M388.9 463.5v2.6M388.4 464.2h2.6M389.7 462.9v2.6M389.2 463.7h2.6M390.5 462.4v2.6M389.9 463.2h2.6M391.2 461.9v2.6M390.7 462.7h2.6M392.0 461.4v2.6M391.5 462.1h2.6M392.8 460.8v2.6M392.2 461.6h2.6M393.5 460.3v2.6M393.0 461.1h2.6M394.3 459.8v2.6M393.7 460.6h2.6M395.0 459.3v2.6M394.5 460.0h2.6M395.8 458.7v2.6M395.3 459.5h2.6M396.6 458.2v2.6M396.0 459.0h2.6M397.3 457.7v2.6M396.8 458.4h2.6M398.1 457.1v2.6M397.5 457.9h2.6M398.8 456.6v2.6M398.3 457.4h2.6M399.6 456.1v2.6M399.0 456.8h2.6M400.3 455.5v2.6M399.8 456.3h2.6M401.1 455.0v2.6M400.5 455.7h2.6M401.8 454.4v2.6M401.3 455.2h2.6M402.6 453.9v2.6M402.0 454.6h2.6M403.3 453.3v2.6M402.8 454.1h2.6M404.1 452.8v2.6M403.5 453.5h2.6M404.8 452.2v2.6M404.3 453.0h2.6M405.6 451.7v2.6M405.0 452.4h2.6M406.3 451.1v2.6M405.8 451.9h2.6M407.1 450.6v2.6M406.5 451.3h2.6M407.8 450.0v2.6M407.2 450.7h2.6M408.5 449.4v2.6M408.0 450.2h2.6M409.3 448.9v2.6M408.7 449.6h2.6M410.0 448.3v2.6M409.4 449.0h2.6M410.7 447.7v2.6M410.2 448.5h2.6M411.5 447.2v2.6M410.9 447.9h2.6M412.2 446.6v2.6M411.6 447.4h2.6M412.9 446.1v2.6M412.4 446.8h2.6M413.7 445.5v2.6M413.1 446.2h2.6M414.4 444.9v2.6M413.9 445.7h2.6M415.2 444.4v2.6M414.6 445.1h2.6M415.9 443.8v2.6M415.3 444.5h2.6M416.6 443.2v2.6M416.1 444.0h2.6M417.4 442.7v2.6M416.8 443.4h2.6M418.1 442.1v2.6M417.5 442.8h2.6M418.8 441.5v2.6M418.3 442.3h2.6M419.6 441.0v2.6M419.0 441.7h2.6M420.3 440.4v2.6M419.7 441.1h2.6M421.0 439.8v2.6M420.5 440.5h2.6M421.8 439.2v2.6M421.2 440.0h2.6M422.5 438.7v2.6M421.9 439.4h2.6M423.2 438.1v2.6M422.6 438.8h2.6M423.9 437.5v2.6M423.4 438.3h2.6M424.7 437.0v2.6M424.1 437.7h2.6M425.4 436.4v2.6M424.8 437.1h2.6M426.1 435.8v2.6M425.6 436.5h2.6M426.9 435.2v2.6M426.3 436.0h2.6M427.6 434.7v2.6M427.0 435.4h2.6M428.3 434.1v2.6M427.8 434.8h2.6M429.1 433.5v2.6M428.5 434.3h2.6M429.8 433.0v2.6M429.2 433.7h2.6M430.5 432.4v2.6M429.9 433.1h2.6M431.2 431.8v2.6M430.7 432.5h2.6M432.0 431.2v2.6M431.4 432.0h2.6M432.7 430.7v2.6M432.1 431.4h2.6M433.4 430.1v2.6M432.8 430.8h2.6M434.1 429.5v2.6M433.6 430.2h2.6M434.9 428.9v2.6M434.3 429.7h2.6M435.6 428.4v2.6M435.0 429.1h2.6M436.3 427.8v2.6M435.8 428.5h2.6M437.1 427.2v2.6M436.5 427.9h2.6M437.8 426.6v2.6M437.2 427.4h2.6M438.5 426.1v2.6M438.0 426.8h2.6M439.3 425.5v2.6M438.7 426.2h2.6M440.0 424.9v2.6M439.4 425.7h2.6M440.7 424.4v2.6M440.2 425.1h2.6M441.5 423.8v2.6M440.9 424.5h2.6M442.2 423.2v2.6M441.6 424.0h2.6M442.9 422.7v2.6M442.4 423.4h2.6M443.7 422.1v2.6M443.1 422.9h2.6M444.4 421.6v2.6M443.9 422.3h2.6M445.2 421.0v2.6M444.6 421.8h2.6M445.9 420.5v2.6M445.3 421.2h2.6M446.6 419.9v2.6M446.1 420.7h2.6M447.4 419.4v2.6M446.9 420.1h2.6M448.2 418.8v2.6M447.6 419.6h2.6M448.9 418.3v2.6M448.4 419.1h2.6M449.7 417.8v2.6M449.2 418.6h2.6M450.5 417.3v2.6M450.0 418.1h2.6M451.3 416.8v2.6M450.8 417.7h2.6M452.1 416.4v2.6M451.6 417.2h2.6M452.9 415.9v2.6M452.4 416.8h2.6M453.7 415.5v2.6M453.3 416.4h2.6M454.6 415.1v2.6M454.1 416.1h2.6M455.4 414.8v2.6M455.0 415.7h2.6M456.3 414.4v2.6M455.8 415.4h2.6M457.1 414.1v2.6M456.7 415.0h2.6M458.0 413.7v2.6" stroke="#f6a834" stroke-width="0.95" fill="none"/>
</svg>

<!-- History window -->
<div class="win" style="left:524px;top:384.7px;width:426px;height:264.8px;background:#7e8ee0;">
  <div class="wt" style="width:426px;height:19.5px;background:linear-gradient(#90acf0 0%,#7698e8 25%,#7494e6 100%);"></div>
  <div style="left:2.2px;top:18.6px;width:421.5px;height:244px;background:#dcdcf4;"></div>
  <span class="t wtt" style="transform:scaleX(0.874);left:5px;top:5.7px;color:#e6ecfc;">History plot</span>
</div>
<svg style="left:917.6px;top:389px" width="30" height="14" viewBox="0 0 30 14"><rect x="0.6" y="0.6" width="13.4" height="12.4" rx="1.5" fill="#6686e6" stroke="#c8d6f8" stroke-width="0.8"/><rect x="4" y="3.6" width="6.6" height="6.4" fill="none" stroke="#fff" stroke-width="1"/><path d="M4 4.4H10.6" stroke="#fff" stroke-width="1.6"/><rect x="15" y="0.6" width="13.4" height="12.4" rx="1.5" fill="#c85470" stroke="#e4b8c8" stroke-width="0.8"/><path d="M18.6 3.8L24.6 9.8M24.6 3.8L18.6 9.8" stroke="#fff" stroke-width="1.6"/></svg>
<svg class="plot" style="left:527.4px;top:404.3px" width="418.7" height="241.1" viewBox="527.4 404.3 418.7 241.1">
<rect x="527.4" y="404.3" width="418.7" height="241.1" fill="#000"/>
<rect x="752.6" y="404" width="27.9" height="242" fill="#0a0a84"/>
<rect x="527" y="575.1" width="420" height="3.4" fill="#f2f2f2"/>
<path d="M527 643.8H947" stroke="#d0d0d0" stroke-width="0.9" stroke-dasharray="1.2 1.6" fill="none"/>
<path d="M546.7 643.6L546.7 634.0L549.0 634.0L549.0 643.6L549.7 643.6L552.0 616.9L552.4 619.9L561.6 619.9L562.0 622.6L568.0 622.6L568.4 643.6L573.0 643.6L574.2 603.2L576.5 605.4L576.5 606.6L576.9 643.6L577.4 643.6L577.7 605.6L578.6 606.6L579.0 643.6L579.5 643.6L579.8 607.9L580.7 605.9L581.1 643.6L581.6 643.6L581.9 606.1L582.8 605.8L583.2 643.6L583.7 643.6L584.0 607.1L584.9 606.7L585.3 643.6L585.8 643.6L586.1 606.9L587.9 596.3L589.0 599.7L590.2 627.2L591.3 598.6L594.7 598.6L594.7 643.6L598.2 643.6L599.3 594.0L600.5 643.6L611.9 643.6L611.9 597.9L616.5 598.6L622.2 598.6L622.9 614.6L623.8 597.4L625.6 595.2L625.6 643.6L626.8 643.6L627.4 594.7L628.2 643.6L629.0 596.0L632.5 597.0L653.0 596.3L653.0 643.6L653.6 643.6L654.2 594.7L656.5 596.3L662.2 595.6L671.4 596.3L672.5 597.9L689.6 597.9L690.8 592.9L692.4 640.9L693.1 587.2L695.4 592.9L698.8 591.7L699.9 588.3L703.4 589.4L710.7 588.3L711.4 643.6L712.0 586.0L715.9 587.8L716.6 639.7L717.5 587.8L720.5 587.8L721.2 643.6L722.1 586.0L723.9 587.2L729.7 587.8L730.1 643.6L730.8 586.0L733.6 587.2L734.2 643.6L734.9 585.5L745.0 587.2L753.3 587.8L753.3 643.6L779.6 643.6L780.3 582.6L781.9 604.3L783.0 586.0L789.9 585.5L791.0 591.7L795.6 592.9L796.7 643.6L797.9 588.3L800.2 591.0L810.5 590.6L811.6 594.0L815.0 594.7L815.5 643.6L816.4 596.3L818.5 604.3L820.1 602.0L821.4 612.3L822.4 643.6L823.3 602.0L827.6 600.9L829.2 597.9L837.9 597.4L838.4 643.6L847.0 643.6L848.2 597.9L858.5 597.4L858.9 643.6L860.8 643.6L861.2 597.4L867.6 597.9L872.2 594.7L884.8 594.0L885.0 643.6L885.9 592.4L890.0 592.4L891.0 605.4L892.3 602.0L893.2 604.3L894.6 592.4L914.5 592.4L914.7 643.6L915.7 594.0L921.4 591.7L925.9 591.0L927.1 612.3" stroke="#f6ee20" stroke-width="1.3" fill="none" stroke-linejoin="round"/>
<path d="M547.9 412.1L550.6 414.8L551.9 428.2L557.3 433.6L562.7 435.0L566.7 433.6L568.0 421.5L572.9 417.5L574.8 424.2L576.1 445.7L578.6 448.0L578.9 426.9L579.7 426.9L580.1 451.0L582.6 451.5L583.0 426.9L584.0 426.9L584.7 452.4L586.9 456.0L589.0 460.5L589.6 460.0L590.0 435.0L591.2 435.0L591.6 461.9L593.8 462.5L594.2 429.6L595.3 429.6L595.7 463.2L597.0 462.0L597.6 440.0L598.5 430.0L601.7 425.5L605.7 422.9L611.0 422.0L612.4 432.3L613.8 451.1L617.8 460.5L622.8 464.5L623.2 440.3L626.8 464.5L627.2 440.3L627.7 467.2L632.6 470.5L643.3 475.3L653.1 478.0L653.6 449.8L654.1 479.3L664.9 483.9L667.6 482.0L671.6 485.5L681.0 486.6L687.7 490.1L692.6 492.8L693.1 469.4L693.6 498.2L699.8 502.2L710.1 506.2L710.6 471.3L711.1 507.6L716.0 508.9L716.5 479.3L717.0 509.7L722.2 510.3L722.7 471.3L723.2 511.6L730.3 514.3L730.8 478.0L731.2 515.6L734.3 517.0L734.8 479.3L735.2 517.5L745.0 521.0L752.5 525.0L753.3 486.0L756.5 476.7L761.9 472.6L778.0 470.5L779.4 480.7L780.7 507.6L783.4 518.3L786.9 519.7L787.4 495.5L787.9 518.3L791.5 526.4L796.9 525.0L797.4 490.1L797.9 525.0L804.9 529.1L814.6 533.1L815.1 506.2L815.6 529.1L822.8 526.4L823.2 502.2L823.7 526.4L829.1 530.4L837.2 533.9L838.6 507.6L841.2 496.8L846.6 492.8L849.3 494.1L850.7 523.7L854.7 533.1L859.5 534.5L860.0 508.9L860.5 535.8L869.5 539.9L885.1 546.6L885.6 518.3L886.1 547.4L889.7 549.3L892.3 545.2L895.0 550.6L908.0 557.3L908.5 535.8L909.0 558.7L915.2 560.8L915.7 531.8L916.2 561.4L923.3 564.6L927.1 566.8L927.6 542.5L928.1 568.1" stroke="#f8b248" stroke-width="2.8" fill="none" stroke-linejoin="round" stroke-linecap="round"/>
</svg>

<svg style="left:759px;top:284px" width="10" height="15" viewBox="0 0 10 15"><path d="M0.6 0.6V11.2L3.2 8.8L5.2 13.2L6.8 12.5L4.8 8.2H8.2Z" fill="#fff" stroke="#111" stroke-width="0.8"/></svg>

<!-- ===== Status bar ===== -->
<div id="status">
  <span class="t" style="transform:scaleX(0.796);left:2px;top:1.8px;">For Help, press F1</span>
  <div style="left:757px;top:2px;width:10px;height:10px;border:1px solid #c8c4b4;border-right-color:#fff;border-bottom-color:#fff;"></div>
  <div style="left:768px;top:2px;width:10px;height:10px;border:1px solid #c8c4b4;border-right-color:#fff;border-bottom-color:#fff;"></div>
  <div style="left:783px;top:2px;width:85px;height:10px;border:1px solid #c8c4b4;border-right-color:#fff;border-bottom-color:#fff;"></div>
  <div style="left:871px;top:2px;width:22px;height:10px;border:1px solid #c8c4b4;border-right-color:#fff;border-bottom-color:#fff;"></div>
  <span class="t" style="transform:scaleX(0.855);left:759.6px;top:1.8px;color:#555;">X</span>
  <span class="t" style="transform:scaleX(0.855);left:769px;top:1.8px;color:#555;">Y</span>
  <span class="t" style="transform:scaleX(0.779);left:788px;top:1.8px;color:#222;">Ram=50MB - VM=89MB</span>
  <span class="t" style="transform:scaleX(0.684);left:876.7px;top:1.8px;color:#222;">NUM</span>
</div>

</body>
</html>
